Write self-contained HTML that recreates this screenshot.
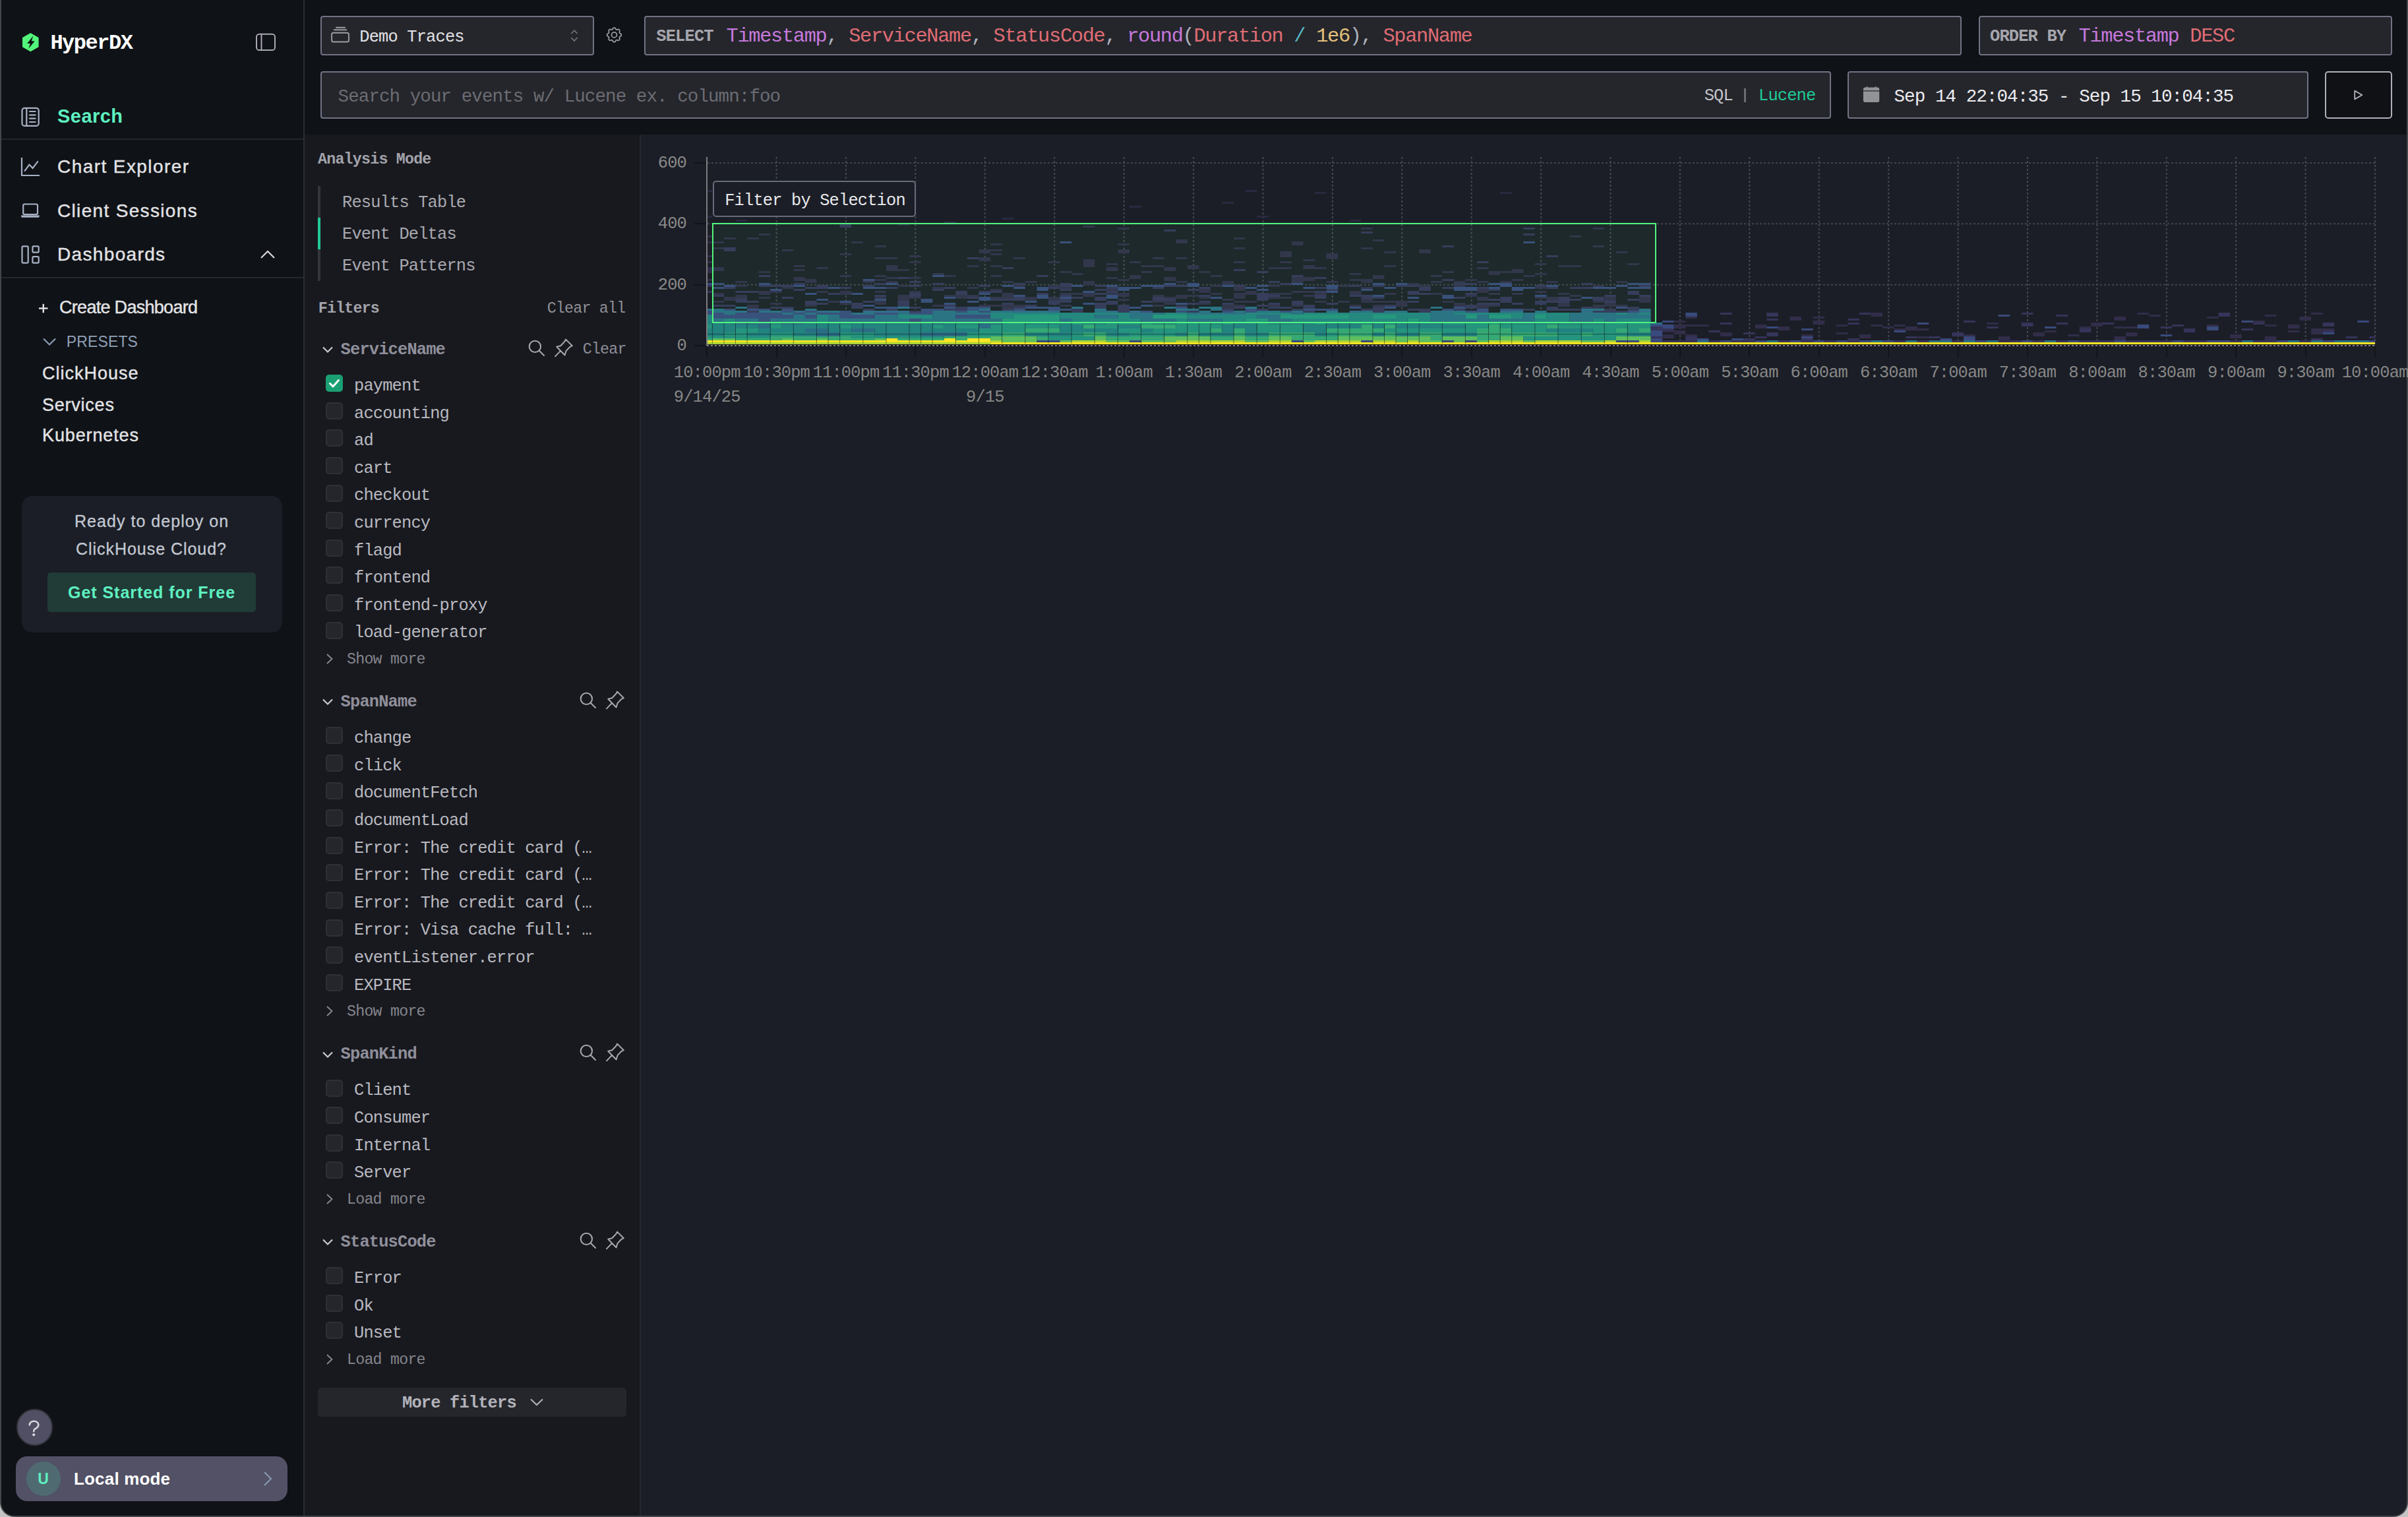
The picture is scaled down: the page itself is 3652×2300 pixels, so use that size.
<!DOCTYPE html>
<html><head><meta charset="utf-8"><title>HyperDX</title>
<style>
html,body{margin:0;padding:0;width:3652px;height:2300px;overflow:hidden;background:#c4c4c4;}
.b,.t,.s{position:absolute;box-sizing:border-box;}
.t{white-space:pre;}
svg.s{overflow:visible;}
</style></head><body>
<div class="b" style="left:0;top:0;width:3652px;height:2300px;background:#c4c4c4;"></div>
<div class="b" style="left:0;top:-4px;width:3652px;height:2304px;background:#43464a;border-radius:0 0 22px 22px;"></div>
<div class="b" style="left:2px;top:-4px;width:3648px;height:2302px;background:#1b1e26;border-radius:0 0 20px 20px;overflow:hidden;"><div class="b" style="left:-2px;top:4px;width:460px;height:2300px;background:#0f1216;"></div><div class="b" style="left:460px;top:4px;width:3652px;height:204px;background:#0f1216;"></div><div class="b" style="left:460px;top:208px;width:510px;height:2300px;background:#18191e;"></div></div>
<div class="b" style="left:460.00px;top:0.00px;width:2.00px;height:2298.00px;background:#2b2d32;"></div>
<div class="b" style="left:970.00px;top:204.00px;width:2.00px;height:2094.00px;background:#25272c;"></div>
<svg class="s" style="left:33.50px;top:49.80px;" width="24.60" height="28.20" viewBox="0 0 24.6 28.2"><path d="M12.3 0 L24.6 7.05 L24.6 21.15 L12.3 28.2 L0 21.15 L0 7.05 Z" fill="#52f57b"/><path d="M16.2 4.6 L7.2 16.1 L11.9 16.1 L9.4 23.8 L18.6 12.3 L13.9 12.3 Z" fill="#0d0f12"/></svg>
<div class="t" style="left:76.40px;top:50.27px;font-size:32.00px;line-height:32.00px;font-family:'Liberation Mono', monospace;color:#ffffff;font-weight:700;letter-spacing:-1.493px;">HyperDX</div>
<svg class="s" style="left:386.00px;top:49.00px;" width="34.00" height="30.00" viewBox="0 0 34 30"><rect x="3" y="2.8" width="28" height="24.3" rx="4.2" fill="none" stroke="#a9a9b4" stroke-width="2"/><line x1="10.5" y1="2.8" x2="10.5" y2="27.1" stroke="#a9a9b4" stroke-width="2"/></svg>
<svg class="s" style="left:30.00px;top:161.00px;" width="32.00" height="32.00" viewBox="0 0 32 32"><rect x="3.5" y="2.9" width="25.2" height="27" rx="3.6" fill="none" stroke="#a7b1c4" stroke-width="2.2"/><line x1="10.3" y1="2.9" x2="10.3" y2="29.9" stroke="#a7b1c4" stroke-width="2.2"/><g stroke="#a7b1c4" stroke-width="2.2" stroke-linecap="round"><line x1="15" y1="8" x2="23.6" y2="8"/><line x1="15" y1="13.3" x2="23.6" y2="13.3"/><line x1="15" y1="18.6" x2="23.6" y2="18.6"/><line x1="15" y1="24" x2="23.6" y2="24"/></g></svg>
<div class="t" style="left:87.00px;top:162.45px;font-size:29.00px;line-height:29.00px;font-family:'Liberation Sans', sans-serif;color:#5ef0c0;font-weight:700;letter-spacing:0.457px;">Search</div>
<div class="b" style="left:2.00px;top:210.00px;width:458.00px;height:2.00px;background:#25272c;"></div>
<svg class="s" style="left:30.00px;top:237.00px;" width="32.00" height="32.00" viewBox="0 0 32 32"><polyline points="3,2 3,29 30,29" fill="none" stroke="#a7b1c4" stroke-width="2.2"/><polyline points="7.1,22.7 14.4,12.6 19.6,18 27.7,7.3" fill="none" stroke="#a7b1c4" stroke-width="2.2" stroke-linejoin="miter"/></svg>
<div class="t" style="left:87.00px;top:239.30px;font-size:28.00px;line-height:28.00px;font-family:'Liberation Sans', sans-serif;color:#e3e3e6;letter-spacing:1.426px;-webkit-text-stroke:0.4px currentColor;">Chart Explorer</div>
<svg class="s" style="left:30.00px;top:305.00px;" width="32.00" height="32.00" viewBox="0 0 32 32"><rect x="5.2" y="4.5" width="21.8" height="15.6" rx="2.2" fill="none" stroke="#a7b1c4" stroke-width="2.2"/><path d="M2 21.6 H29.8 V22.4 Q29.8 24.8 27.2 24.8 H4.6 Q2 24.8 2 22.4 Z" fill="#a7b1c4"/></svg>
<div class="t" style="left:87.00px;top:305.80px;font-size:28.00px;line-height:28.00px;font-family:'Liberation Sans', sans-serif;color:#e3e3e6;letter-spacing:1.334px;-webkit-text-stroke:0.4px currentColor;">Client Sessions</div>
<svg class="s" style="left:30.00px;top:370.00px;" width="32.00" height="32.00" viewBox="0 0 32 32"><rect x="3.5" y="3.4" width="9.2" height="25.2" rx="1.6" fill="none" stroke="#a7b1c4" stroke-width="2.2"/><rect x="19.4" y="3.4" width="9.3" height="9.3" rx="1.6" fill="none" stroke="#a7b1c4" stroke-width="2.2"/><rect x="19.4" y="19.1" width="9.3" height="9.5" rx="1.6" fill="none" stroke="#a7b1c4" stroke-width="2.2"/></svg>
<div class="t" style="left:87.00px;top:372.30px;font-size:28.00px;line-height:28.00px;font-family:'Liberation Sans', sans-serif;color:#e3e3e6;letter-spacing:1.342px;-webkit-text-stroke:0.4px currentColor;">Dashboards</div>
<svg class="s" style="left:394.00px;top:378.00px;" width="24.00" height="16.00" viewBox="0 0 24 16"><polyline points="2,13 12,3 22,13" fill="none" stroke="#d9d9de" stroke-width="2.2"/></svg>
<div class="b" style="left:2.00px;top:420.00px;width:458.00px;height:2.00px;background:#25272c;"></div>
<svg class="s" style="left:58.00px;top:459.00px;" width="16.00" height="18.00" viewBox="0 0 16 18"><line x1="1" y1="8.5" x2="14.5" y2="8.5" stroke="#e3e3e6" stroke-width="2.4"/><line x1="7.75" y1="1.8" x2="7.75" y2="15.2" stroke="#e3e3e6" stroke-width="2.4"/></svg>
<div class="t" style="left:90.00px;top:452.54px;font-size:27.00px;line-height:27.00px;font-family:'Liberation Sans', sans-serif;color:#e3e3e6;letter-spacing:-0.706px;-webkit-text-stroke:0.4px currentColor;">Create Dashboard</div>
<svg class="s" style="left:64.00px;top:511.00px;" width="22.00" height="14.00" viewBox="0 0 22 14"><polyline points="2,2.5 11,11.5 20,2.5" fill="none" stroke="#8a9bb4" stroke-width="2.2"/></svg>
<div class="t" style="left:100.70px;top:506.53px;font-size:23.00px;line-height:23.00px;font-family:'Liberation Sans', sans-serif;color:#8fa0b8;letter-spacing:0.148px;">PRESETS</div>
<div class="t" style="left:64.00px;top:553.14px;font-size:27.00px;line-height:27.00px;font-family:'Liberation Sans', sans-serif;color:#e3e3e6;letter-spacing:1.002px;-webkit-text-stroke:0.4px currentColor;">ClickHouse</div>
<div class="t" style="left:64.00px;top:600.54px;font-size:27.00px;line-height:27.00px;font-family:'Liberation Sans', sans-serif;color:#e3e3e6;letter-spacing:0.765px;-webkit-text-stroke:0.4px currentColor;">Services</div>
<div class="t" style="left:64.00px;top:647.34px;font-size:27.00px;line-height:27.00px;font-family:'Liberation Sans', sans-serif;color:#e3e3e6;letter-spacing:0.877px;-webkit-text-stroke:0.4px currentColor;">Kubernetes</div>
<div class="b" style="left:32.50px;top:752.00px;width:395.50px;height:207.00px;background:#1b1e26;border-radius:16px;"></div>
<div class="t" style="left:113.00px;top:777.84px;font-size:25.00px;line-height:25.00px;font-family:'Liberation Sans', sans-serif;color:#c3c8d2;letter-spacing:1.037px;-webkit-text-stroke:0.3px currentColor;">Ready to deploy on</div>
<div class="t" style="left:115.00px;top:819.84px;font-size:25.00px;line-height:25.00px;font-family:'Liberation Sans', sans-serif;color:#c3c8d2;letter-spacing:0.961px;-webkit-text-stroke:0.3px currentColor;">ClickHouse Cloud?</div>
<div class="b" style="left:72.00px;top:868.00px;width:316.00px;height:60.00px;background:#213b37;border-radius:5px;"></div>
<div class="t" style="left:103.00px;top:886.14px;font-size:25.00px;line-height:25.00px;font-family:'Liberation Sans', sans-serif;color:#5ef0c0;font-weight:700;letter-spacing:0.961px;">Get Started for Free</div>
<div class="b" style="left:24.50px;top:2136.00px;width:55.00px;height:55.50px;background:#504f63;border:2px solid #363640;border-radius:28px;"></div>
<svg class="s" style="left:40.00px;top:2150.00px;" width="24.00" height="30.00" viewBox="0 0 24 30"><path d="M4.8 10.5 C4.8 6.8 7.8 4.8 11.5 4.8 C15.5 4.8 18.3 7.3 18.3 10.6 C18.3 14.5 14.8 15 12.6 16.8 C11.6 17.6 11.2 18.5 11.2 20.3" fill="none" stroke="#d6d6de" stroke-width="2.6" stroke-linecap="round"/><circle cx="11.2" cy="25.3" r="2.1" fill="#d6d6de"/></svg>
<div class="b" style="left:24.00px;top:2208.00px;width:412.00px;height:68.00px;background:#525166;border-radius:17px;"></div>
<div class="b" style="left:40.00px;top:2216.00px;width:52.00px;height:52.00px;background:#4f6b71;border-radius:26px;"></div>
<div class="t" style="left:57.22px;top:2230.53px;font-size:23.00px;line-height:23.00px;font-family:'Liberation Sans', sans-serif;color:#5ef0c0;font-weight:700;">U</div>
<div class="t" style="left:112.00px;top:2229.39px;font-size:26.00px;line-height:26.00px;font-family:'Liberation Sans', sans-serif;color:#ffffff;font-weight:700;letter-spacing:0.174px;">Local mode</div>
<svg class="s" style="left:398.00px;top:2230.00px;" width="16.00" height="24.00" viewBox="0 0 16 24"><polyline points="3,2 13,12 3,22" fill="none" stroke="#8a9bb4" stroke-width="2"/></svg>
<div class="b" style="left:486.00px;top:24.00px;width:415.00px;height:60.00px;background:#25262b;border:2px solid #717284;border-radius:4px;"></div>
<svg class="s" style="left:500.00px;top:38.00px;" width="32.00" height="29.00" viewBox="0 0 32 29"><rect x="3.1" y="11.7" width="25.9" height="13.8" rx="2.6" fill="none" stroke="#9c9ea4" stroke-width="1.9"/><g stroke="#9c9ea4" stroke-width="1.9" stroke-linecap="round"><line x1="6.7" y1="7.2" x2="25.4" y2="7.2"/><line x1="10" y1="3.7" x2="23.1" y2="3.7"/></g></svg>
<div class="t" style="left:545.30px;top:44.00px;font-size:25.44px;line-height:25.44px;font-family:'Liberation Mono', monospace;color:#e2e2e6;letter-spacing:-0.864px;">Demo Traces</div>
<svg class="s" style="left:863.00px;top:44.00px;" width="16.00" height="20.00" viewBox="0 0 16 20"><polyline points="3.2,7 8,2.2 12.6,6.8" fill="none" stroke="#72737b" stroke-width="1.7"/><polyline points="3.2,13.2 8,18 12.6,13" fill="none" stroke="#72737b" stroke-width="1.7"/></svg>
<svg class="s" style="left:917.90px;top:40.10px;" width="28.00" height="28.00" viewBox="0 0 28 28"><g transform="translate(0.4 0.4) scale(0.97)"><path d="M11.3 3.2 C11.8 1.2 15.2 1.2 15.7 3.2 C16 4.6 17.6 5.3 18.8 4.5 C20.6 3.4 23 5.8 21.9 7.6 C21.1 8.8 21.8 10.4 23.2 10.7 C25.2 11.2 25.2 14.6 23.2 15.1 C21.8 15.4 21.1 17 21.9 18.2 C23 20 20.6 22.4 18.8 21.3 C17.6 20.5 16 21.2 15.7 22.6 C15.2 24.6 11.8 24.6 11.3 22.6 C11 21.2 9.4 20.5 8.2 21.3 C6.4 22.4 4 20 5.1 18.2 C5.9 17 5.2 15.4 3.8 15.1 C1.8 14.6 1.8 11.2 3.8 10.7 C5.2 10.4 5.9 8.8 5.1 7.6 C4 5.8 6.4 3.4 8.2 4.5 C9.4 5.3 11 4.6 11.3 3.2 Z" fill="none" stroke="#9c9ea4" stroke-width="1.8"/><circle cx="13.5" cy="12.9" r="4.1" fill="none" stroke="#9c9ea4" stroke-width="1.8"/></g></svg>
<div class="b" style="left:977.40px;top:24.40px;width:1997.90px;height:59.20px;background:#25262b;border:2px solid #717284;border-radius:4px;"></div>
<div class="t" style="left:995.30px;top:42.80px;font-size:25.44px;line-height:25.44px;font-family:'Liberation Mono', monospace;color:#a6a6ae;font-weight:700;letter-spacing:-0.864px;">SELECT</div>
<div class="t" style="left:1101.50px;top:39.92px;font-size:30.38px;line-height:30.38px;font-family:'Liberation Mono', monospace;letter-spacing:-1.350px;"><span style="color:#c678dd;">Timestamp</span><span style="color:#abb2bf;">,&nbsp;</span><span style="color:#e06c75;">ServiceName</span><span style="color:#abb2bf;">,&nbsp;</span><span style="color:#e06c75;">StatusCode</span><span style="color:#abb2bf;">,&nbsp;</span><span style="color:#c678dd;">round</span><span style="color:#abb2bf;">(</span><span style="color:#e06c75;">Duration</span><span style="color:#abb2bf;">&nbsp;</span><span style="color:#56b6c2;">/</span><span style="color:#abb2bf;">&nbsp;</span><span style="color:#e5c07b;">1e6</span><span style="color:#abb2bf;">)</span><span style="color:#abb2bf;">,&nbsp;</span><span style="color:#e06c75;">SpanName</span></div>
<div class="b" style="left:3000.60px;top:24.40px;width:627.10px;height:59.20px;background:#25262b;border:2px solid #717284;border-radius:4px;"></div>
<div class="t" style="left:3018.00px;top:43.00px;font-size:25.44px;line-height:25.44px;font-family:'Liberation Mono', monospace;color:#a6a6ae;font-weight:700;letter-spacing:-0.864px;">ORDER BY</div>
<div class="t" style="left:3152.50px;top:39.92px;font-size:30.38px;line-height:30.38px;font-family:'Liberation Mono', monospace;letter-spacing:-1.350px;"><span style="color:#c678dd;">Timestamp</span><span style="color:#abb2bf;">&nbsp;</span><span style="color:#e06c75;">DESC</span></div>
<div class="b" style="left:486.00px;top:108.00px;width:2291.40px;height:72.00px;background:#25262b;border:2px solid #717284;border-radius:4px;"></div>
<div class="t" style="left:512.60px;top:132.58px;font-size:27.56px;line-height:27.56px;font-family:'Liberation Mono', monospace;color:#6b6c73;letter-spacing:-0.936px;">Search your events w/ Lucene ex. column:foo</div>
<div class="t" style="left:2584.70px;top:132.80px;font-size:25.44px;line-height:25.44px;font-family:'Liberation Mono', monospace;color:#c4c4ca;letter-spacing:-0.864px;">SQL</div>
<div class="b" style="left:2644.50px;top:133.60px;width:3.00px;height:21.70px;background:#6c6d73;"></div>
<div class="t" style="left:2667.00px;top:132.80px;font-size:25.44px;line-height:25.44px;font-family:'Liberation Mono', monospace;color:#20c997;letter-spacing:-0.864px;">Lucene</div>
<div class="b" style="left:2802.30px;top:108.00px;width:698.70px;height:72.00px;background:#25262b;border:2px solid #717284;border-radius:4px;"></div>
<svg class="s" style="left:2825.00px;top:130.00px;" width="26.00" height="26.00" viewBox="0 0 26 26"><path d="M0.9 7.2 V5.4 Q0.9 2.6 3.7 2.6 H22.4 Q25.2 2.6 25.2 5.4 V7.2 Z" fill="#929397"/><path d="M0.9 8.4 H25.2 V22.2 Q25.2 25 22.4 25 H3.7 Q0.9 25 0.9 22.2 Z" fill="#929397"/><rect x="5.7" y="1" width="1.6" height="3" rx="0.6" fill="#929397"/><rect x="18.8" y="1" width="1.6" height="3" rx="0.6" fill="#929397"/></svg>
<div class="t" style="left:2872.50px;top:133.28px;font-size:27.56px;line-height:27.56px;font-family:'Liberation Mono', monospace;color:#ececf0;letter-spacing:-0.936px;">Sep 14 22:04:35 - Sep 15 10:04:35</div>
<div class="b" style="left:3526.00px;top:108.00px;width:101.70px;height:72.00px;background:#0f1115;border:2px solid #b0b0bb;border-radius:5px;"></div>
<svg class="s" style="left:3567.00px;top:135.00px;" width="20.00" height="18.00" viewBox="0 0 20 18"><path d="M4.2 2.6 L15.4 9 L4.2 15.4 Z" fill="none" stroke="#b2b2bc" stroke-width="1.8" stroke-linejoin="round"/></svg>
<div class="t" style="left:482.00px;top:231.13px;font-size:23.32px;line-height:23.32px;font-family:'Liberation Mono', monospace;color:#a3a3ab;font-weight:700;letter-spacing:-0.792px;">Analysis Mode</div>
<div class="b" style="left:481.60px;top:282.00px;width:4.00px;height:143.60px;background:#35363c;"></div>
<div class="b" style="left:481.60px;top:330.00px;width:4.00px;height:48.00px;background:#20c997;"></div>
<div class="t" style="left:519.00px;top:294.50px;font-size:25.44px;line-height:25.44px;font-family:'Liberation Mono', monospace;color:#a9a9b1;letter-spacing:-0.864px;">Results Table</div>
<div class="t" style="left:519.00px;top:342.90px;font-size:25.44px;line-height:25.44px;font-family:'Liberation Mono', monospace;color:#a9a9b1;letter-spacing:-0.864px;">Event Deltas</div>
<div class="t" style="left:519.00px;top:391.00px;font-size:25.44px;line-height:25.44px;font-family:'Liberation Mono', monospace;color:#a9a9b1;letter-spacing:-0.864px;">Event Patterns</div>
<div class="t" style="left:482.70px;top:457.13px;font-size:23.32px;line-height:23.32px;font-family:'Liberation Mono', monospace;color:#a3a3ab;font-weight:700;letter-spacing:-0.792px;">Filters</div>
<div class="t" style="left:829.70px;top:457.13px;font-size:23.32px;line-height:23.32px;font-family:'Liberation Mono', monospace;color:#909098;letter-spacing:-0.792px;">Clear all</div>
<svg class="s" style="left:487.50px;top:524.20px;" width="19.00" height="13.00" viewBox="0 0 19 13"><polyline points="2,2.5 9,9.5 16,2.5" fill="none" stroke="#c9c9cf" stroke-width="2.2"/></svg>
<div class="t" style="left:516.60px;top:517.70px;font-size:25.44px;line-height:25.44px;font-family:'Liberation Mono', monospace;color:#8f8f9b;font-weight:700;letter-spacing:-0.864px;">ServiceName</div>
<svg class="s" style="left:799.00px;top:513.00px;" width="29.76" height="29.76" viewBox="0 0 24 24"><circle cx="10" cy="10" r="7" fill="none" stroke="#a6a6ae" stroke-width="1.65"/><path d="M21 21l-6 -6" fill="none" stroke="#a6a6ae" stroke-width="1.65" stroke-linecap="round"/></svg>
<svg class="s" style="left:840.00px;top:512.00px;" width="30.00" height="30.00" viewBox="0 0 30 30"><path d="M18.1 2.6 L27.8 12.3 L24.5 13.8 L18.5 20.1 L16.6 26.5 L4.3 13.8 L10.3 12.3 L16.2 6.0 Z M9.9 20.1 L2.0 28.4" fill="none" stroke="#a6a6ae" stroke-width="2" stroke-linejoin="round" stroke-linecap="round"/></svg>
<div class="t" style="left:883.70px;top:518.73px;font-size:23.32px;line-height:23.32px;font-family:'Liberation Mono', monospace;color:#8e8e9a;letter-spacing:-0.792px;">Clear</div>
<div class="b" style="left:494.00px;top:568.20px;width:26.00px;height:26.00px;background:#1a9f72;border-radius:5px;"></div>
<svg class="s" style="left:494.00px;top:568.20px;" width="26.00" height="26.00" viewBox="0 0 26 26"><polyline points="6.5,13.5 11,18 19.5,8.5" fill="none" stroke="#ffffff" stroke-width="3" stroke-linecap="round" stroke-linejoin="round"/></svg>
<div class="t" style="left:537.00px;top:573.00px;font-size:25.44px;line-height:25.44px;font-family:'Liberation Mono', monospace;color:#b9b9c1;letter-spacing:-0.864px;">payment</div>
<div class="b" style="left:494.00px;top:609.80px;width:26.00px;height:26.00px;background:#25262b;border:2px solid #2f3035;border-radius:5px;"></div>
<div class="t" style="left:537.00px;top:614.60px;font-size:25.44px;line-height:25.44px;font-family:'Liberation Mono', monospace;color:#b9b9c1;letter-spacing:-0.864px;">accounting</div>
<div class="b" style="left:494.00px;top:651.40px;width:26.00px;height:26.00px;background:#25262b;border:2px solid #2f3035;border-radius:5px;"></div>
<div class="t" style="left:537.00px;top:656.20px;font-size:25.44px;line-height:25.44px;font-family:'Liberation Mono', monospace;color:#b9b9c1;letter-spacing:-0.864px;">ad</div>
<div class="b" style="left:494.00px;top:693.00px;width:26.00px;height:26.00px;background:#25262b;border:2px solid #2f3035;border-radius:5px;"></div>
<div class="t" style="left:537.00px;top:697.80px;font-size:25.44px;line-height:25.44px;font-family:'Liberation Mono', monospace;color:#b9b9c1;letter-spacing:-0.864px;">cart</div>
<div class="b" style="left:494.00px;top:734.60px;width:26.00px;height:26.00px;background:#25262b;border:2px solid #2f3035;border-radius:5px;"></div>
<div class="t" style="left:537.00px;top:739.40px;font-size:25.44px;line-height:25.44px;font-family:'Liberation Mono', monospace;color:#b9b9c1;letter-spacing:-0.864px;">checkout</div>
<div class="b" style="left:494.00px;top:776.20px;width:26.00px;height:26.00px;background:#25262b;border:2px solid #2f3035;border-radius:5px;"></div>
<div class="t" style="left:537.00px;top:781.00px;font-size:25.44px;line-height:25.44px;font-family:'Liberation Mono', monospace;color:#b9b9c1;letter-spacing:-0.864px;">currency</div>
<div class="b" style="left:494.00px;top:817.80px;width:26.00px;height:26.00px;background:#25262b;border:2px solid #2f3035;border-radius:5px;"></div>
<div class="t" style="left:537.00px;top:822.60px;font-size:25.44px;line-height:25.44px;font-family:'Liberation Mono', monospace;color:#b9b9c1;letter-spacing:-0.864px;">flagd</div>
<div class="b" style="left:494.00px;top:859.40px;width:26.00px;height:26.00px;background:#25262b;border:2px solid #2f3035;border-radius:5px;"></div>
<div class="t" style="left:537.00px;top:864.20px;font-size:25.44px;line-height:25.44px;font-family:'Liberation Mono', monospace;color:#b9b9c1;letter-spacing:-0.864px;">frontend</div>
<div class="b" style="left:494.00px;top:901.00px;width:26.00px;height:26.00px;background:#25262b;border:2px solid #2f3035;border-radius:5px;"></div>
<div class="t" style="left:537.00px;top:905.80px;font-size:25.44px;line-height:25.44px;font-family:'Liberation Mono', monospace;color:#b9b9c1;letter-spacing:-0.864px;">frontend-proxy</div>
<div class="b" style="left:494.00px;top:942.60px;width:26.00px;height:26.00px;background:#25262b;border:2px solid #2f3035;border-radius:5px;"></div>
<div class="t" style="left:537.00px;top:947.40px;font-size:25.44px;line-height:25.44px;font-family:'Liberation Mono', monospace;color:#b9b9c1;letter-spacing:-0.864px;">load-generator</div>
<svg class="s" style="left:494.00px;top:990.10px;" width="14.00" height="20.00" viewBox="0 0 14 20"><polyline points="2,2 9.5,9 2,16" fill="none" stroke="#8a8a92" stroke-width="1.8"/></svg>
<div class="t" style="left:526.00px;top:989.23px;font-size:23.32px;line-height:23.32px;font-family:'Liberation Mono', monospace;color:#85858d;letter-spacing:-0.792px;">Show more</div>
<svg class="s" style="left:487.50px;top:1058.40px;" width="19.00" height="13.00" viewBox="0 0 19 13"><polyline points="2,2.5 9,9.5 16,2.5" fill="none" stroke="#c9c9cf" stroke-width="2.2"/></svg>
<div class="t" style="left:516.60px;top:1051.90px;font-size:25.44px;line-height:25.44px;font-family:'Liberation Mono', monospace;color:#8f8f9b;font-weight:700;letter-spacing:-0.864px;">SpanName</div>
<svg class="s" style="left:877.00px;top:1047.20px;" width="29.76" height="29.76" viewBox="0 0 24 24"><circle cx="10" cy="10" r="7" fill="none" stroke="#a6a6ae" stroke-width="1.65"/><path d="M21 21l-6 -6" fill="none" stroke="#a6a6ae" stroke-width="1.65" stroke-linecap="round"/></svg>
<svg class="s" style="left:918.00px;top:1046.20px;" width="30.00" height="30.00" viewBox="0 0 30 30"><path d="M18.1 2.6 L27.8 12.3 L24.5 13.8 L18.5 20.1 L16.6 26.5 L4.3 13.8 L10.3 12.3 L16.2 6.0 Z M9.9 20.1 L2.0 28.4" fill="none" stroke="#a6a6ae" stroke-width="2" stroke-linejoin="round" stroke-linecap="round"/></svg>
<div class="b" style="left:494.00px;top:1102.40px;width:26.00px;height:26.00px;background:#25262b;border:2px solid #2f3035;border-radius:5px;"></div>
<div class="t" style="left:537.00px;top:1107.20px;font-size:25.44px;line-height:25.44px;font-family:'Liberation Mono', monospace;color:#b9b9c1;letter-spacing:-0.864px;">change</div>
<div class="b" style="left:494.00px;top:1144.00px;width:26.00px;height:26.00px;background:#25262b;border:2px solid #2f3035;border-radius:5px;"></div>
<div class="t" style="left:537.00px;top:1148.80px;font-size:25.44px;line-height:25.44px;font-family:'Liberation Mono', monospace;color:#b9b9c1;letter-spacing:-0.864px;">click</div>
<div class="b" style="left:494.00px;top:1185.60px;width:26.00px;height:26.00px;background:#25262b;border:2px solid #2f3035;border-radius:5px;"></div>
<div class="t" style="left:537.00px;top:1190.40px;font-size:25.44px;line-height:25.44px;font-family:'Liberation Mono', monospace;color:#b9b9c1;letter-spacing:-0.864px;">documentFetch</div>
<div class="b" style="left:494.00px;top:1227.20px;width:26.00px;height:26.00px;background:#25262b;border:2px solid #2f3035;border-radius:5px;"></div>
<div class="t" style="left:537.00px;top:1232.00px;font-size:25.44px;line-height:25.44px;font-family:'Liberation Mono', monospace;color:#b9b9c1;letter-spacing:-0.864px;">documentLoad</div>
<div class="b" style="left:494.00px;top:1268.80px;width:26.00px;height:26.00px;background:#25262b;border:2px solid #2f3035;border-radius:5px;"></div>
<div class="t" style="left:537.00px;top:1273.60px;font-size:25.44px;line-height:25.44px;font-family:'Liberation Mono', monospace;color:#b9b9c1;letter-spacing:-0.864px;">Error: The credit card (…</div>
<div class="b" style="left:494.00px;top:1310.40px;width:26.00px;height:26.00px;background:#25262b;border:2px solid #2f3035;border-radius:5px;"></div>
<div class="t" style="left:537.00px;top:1315.20px;font-size:25.44px;line-height:25.44px;font-family:'Liberation Mono', monospace;color:#b9b9c1;letter-spacing:-0.864px;">Error: The credit card (…</div>
<div class="b" style="left:494.00px;top:1352.00px;width:26.00px;height:26.00px;background:#25262b;border:2px solid #2f3035;border-radius:5px;"></div>
<div class="t" style="left:537.00px;top:1356.80px;font-size:25.44px;line-height:25.44px;font-family:'Liberation Mono', monospace;color:#b9b9c1;letter-spacing:-0.864px;">Error: The credit card (…</div>
<div class="b" style="left:494.00px;top:1393.60px;width:26.00px;height:26.00px;background:#25262b;border:2px solid #2f3035;border-radius:5px;"></div>
<div class="t" style="left:537.00px;top:1398.40px;font-size:25.44px;line-height:25.44px;font-family:'Liberation Mono', monospace;color:#b9b9c1;letter-spacing:-0.864px;">Error: Visa cache full: …</div>
<div class="b" style="left:494.00px;top:1435.20px;width:26.00px;height:26.00px;background:#25262b;border:2px solid #2f3035;border-radius:5px;"></div>
<div class="t" style="left:537.00px;top:1440.00px;font-size:25.44px;line-height:25.44px;font-family:'Liberation Mono', monospace;color:#b9b9c1;letter-spacing:-0.864px;">eventListener.error</div>
<div class="b" style="left:494.00px;top:1476.80px;width:26.00px;height:26.00px;background:#25262b;border:2px solid #2f3035;border-radius:5px;"></div>
<div class="t" style="left:537.00px;top:1481.60px;font-size:25.44px;line-height:25.44px;font-family:'Liberation Mono', monospace;color:#b9b9c1;letter-spacing:-0.864px;">EXPIRE</div>
<svg class="s" style="left:494.00px;top:1524.30px;" width="14.00" height="20.00" viewBox="0 0 14 20"><polyline points="2,2 9.5,9 2,16" fill="none" stroke="#8a8a92" stroke-width="1.8"/></svg>
<div class="t" style="left:526.00px;top:1523.43px;font-size:23.32px;line-height:23.32px;font-family:'Liberation Mono', monospace;color:#85858d;letter-spacing:-0.792px;">Show more</div>
<svg class="s" style="left:487.50px;top:1592.60px;" width="19.00" height="13.00" viewBox="0 0 19 13"><polyline points="2,2.5 9,9.5 16,2.5" fill="none" stroke="#c9c9cf" stroke-width="2.2"/></svg>
<div class="t" style="left:516.60px;top:1586.10px;font-size:25.44px;line-height:25.44px;font-family:'Liberation Mono', monospace;color:#8f8f9b;font-weight:700;letter-spacing:-0.864px;">SpanKind</div>
<svg class="s" style="left:877.00px;top:1581.40px;" width="29.76" height="29.76" viewBox="0 0 24 24"><circle cx="10" cy="10" r="7" fill="none" stroke="#a6a6ae" stroke-width="1.65"/><path d="M21 21l-6 -6" fill="none" stroke="#a6a6ae" stroke-width="1.65" stroke-linecap="round"/></svg>
<svg class="s" style="left:918.00px;top:1580.40px;" width="30.00" height="30.00" viewBox="0 0 30 30"><path d="M18.1 2.6 L27.8 12.3 L24.5 13.8 L18.5 20.1 L16.6 26.5 L4.3 13.8 L10.3 12.3 L16.2 6.0 Z M9.9 20.1 L2.0 28.4" fill="none" stroke="#a6a6ae" stroke-width="2" stroke-linejoin="round" stroke-linecap="round"/></svg>
<div class="b" style="left:494.00px;top:1636.60px;width:26.00px;height:26.00px;background:#25262b;border:2px solid #2f3035;border-radius:5px;"></div>
<div class="t" style="left:537.00px;top:1641.40px;font-size:25.44px;line-height:25.44px;font-family:'Liberation Mono', monospace;color:#b9b9c1;letter-spacing:-0.864px;">Client</div>
<div class="b" style="left:494.00px;top:1678.20px;width:26.00px;height:26.00px;background:#25262b;border:2px solid #2f3035;border-radius:5px;"></div>
<div class="t" style="left:537.00px;top:1683.00px;font-size:25.44px;line-height:25.44px;font-family:'Liberation Mono', monospace;color:#b9b9c1;letter-spacing:-0.864px;">Consumer</div>
<div class="b" style="left:494.00px;top:1719.80px;width:26.00px;height:26.00px;background:#25262b;border:2px solid #2f3035;border-radius:5px;"></div>
<div class="t" style="left:537.00px;top:1724.60px;font-size:25.44px;line-height:25.44px;font-family:'Liberation Mono', monospace;color:#b9b9c1;letter-spacing:-0.864px;">Internal</div>
<div class="b" style="left:494.00px;top:1761.40px;width:26.00px;height:26.00px;background:#25262b;border:2px solid #2f3035;border-radius:5px;"></div>
<div class="t" style="left:537.00px;top:1766.20px;font-size:25.44px;line-height:25.44px;font-family:'Liberation Mono', monospace;color:#b9b9c1;letter-spacing:-0.864px;">Server</div>
<svg class="s" style="left:494.00px;top:1808.90px;" width="14.00" height="20.00" viewBox="0 0 14 20"><polyline points="2,2 9.5,9 2,16" fill="none" stroke="#8a8a92" stroke-width="1.8"/></svg>
<div class="t" style="left:526.00px;top:1808.03px;font-size:23.32px;line-height:23.32px;font-family:'Liberation Mono', monospace;color:#85858d;letter-spacing:-0.792px;">Load more</div>
<svg class="s" style="left:487.50px;top:1877.20px;" width="19.00" height="13.00" viewBox="0 0 19 13"><polyline points="2,2.5 9,9.5 16,2.5" fill="none" stroke="#c9c9cf" stroke-width="2.2"/></svg>
<div class="t" style="left:516.60px;top:1870.70px;font-size:25.44px;line-height:25.44px;font-family:'Liberation Mono', monospace;color:#8f8f9b;font-weight:700;letter-spacing:-0.864px;">StatusCode</div>
<svg class="s" style="left:877.00px;top:1866.00px;" width="29.76" height="29.76" viewBox="0 0 24 24"><circle cx="10" cy="10" r="7" fill="none" stroke="#a6a6ae" stroke-width="1.65"/><path d="M21 21l-6 -6" fill="none" stroke="#a6a6ae" stroke-width="1.65" stroke-linecap="round"/></svg>
<svg class="s" style="left:918.00px;top:1865.00px;" width="30.00" height="30.00" viewBox="0 0 30 30"><path d="M18.1 2.6 L27.8 12.3 L24.5 13.8 L18.5 20.1 L16.6 26.5 L4.3 13.8 L10.3 12.3 L16.2 6.0 Z M9.9 20.1 L2.0 28.4" fill="none" stroke="#a6a6ae" stroke-width="2" stroke-linejoin="round" stroke-linecap="round"/></svg>
<div class="b" style="left:494.00px;top:1921.20px;width:26.00px;height:26.00px;background:#25262b;border:2px solid #2f3035;border-radius:5px;"></div>
<div class="t" style="left:537.00px;top:1926.00px;font-size:25.44px;line-height:25.44px;font-family:'Liberation Mono', monospace;color:#b9b9c1;letter-spacing:-0.864px;">Error</div>
<div class="b" style="left:494.00px;top:1962.80px;width:26.00px;height:26.00px;background:#25262b;border:2px solid #2f3035;border-radius:5px;"></div>
<div class="t" style="left:537.00px;top:1967.60px;font-size:25.44px;line-height:25.44px;font-family:'Liberation Mono', monospace;color:#b9b9c1;letter-spacing:-0.864px;">Ok</div>
<div class="b" style="left:494.00px;top:2004.40px;width:26.00px;height:26.00px;background:#25262b;border:2px solid #2f3035;border-radius:5px;"></div>
<div class="t" style="left:537.00px;top:2009.20px;font-size:25.44px;line-height:25.44px;font-family:'Liberation Mono', monospace;color:#b9b9c1;letter-spacing:-0.864px;">Unset</div>
<svg class="s" style="left:494.00px;top:2051.90px;" width="14.00" height="20.00" viewBox="0 0 14 20"><polyline points="2,2 9.5,9 2,16" fill="none" stroke="#8a8a92" stroke-width="1.8"/></svg>
<div class="t" style="left:526.00px;top:2051.03px;font-size:23.32px;line-height:23.32px;font-family:'Liberation Mono', monospace;color:#85858d;letter-spacing:-0.792px;">Load more</div>
<div class="b" style="left:482.40px;top:2103.90px;width:467.30px;height:43.70px;background:#25262b;border-radius:5px;"></div>
<div class="t" style="left:610.00px;top:2115.40px;font-size:25.44px;line-height:25.44px;font-family:'Liberation Mono', monospace;color:#b3b3bb;font-weight:700;letter-spacing:-0.864px;">More filters</div>
<svg class="s" style="left:803.00px;top:2119.40px;" width="24.00" height="14.00" viewBox="0 0 24 14"><polyline points="2,2.5 11,11 20,2.5" fill="none" stroke="#b3b3bb" stroke-width="2"/></svg>
<div class="t" style="left:997.80px;top:234.80px;font-size:25.44px;line-height:25.44px;font-family:'Liberation Mono', monospace;color:#8a8a8a;letter-spacing:-0.864px;">600</div>
<div class="b" style="left:1052.60px;top:246.00px;width:17.40px;height:2.00px;background:#121419;"></div>
<div class="t" style="left:997.80px;top:327.10px;font-size:25.44px;line-height:25.44px;font-family:'Liberation Mono', monospace;color:#8a8a8a;letter-spacing:-0.864px;">400</div>
<div class="b" style="left:1052.60px;top:338.30px;width:17.40px;height:2.00px;background:#121419;"></div>
<div class="t" style="left:997.80px;top:419.50px;font-size:25.44px;line-height:25.44px;font-family:'Liberation Mono', monospace;color:#8a8a8a;letter-spacing:-0.864px;">200</div>
<div class="b" style="left:1052.60px;top:430.70px;width:17.40px;height:2.00px;background:#121419;"></div>
<div class="t" style="left:1026.60px;top:511.80px;font-size:25.44px;line-height:25.44px;font-family:'Liberation Mono', monospace;color:#8a8a8a;letter-spacing:-0.864px;">0</div>
<div class="b" style="left:1052.60px;top:523.00px;width:17.40px;height:2.00px;background:#121419;"></div>
<svg class="s" style="left:1072.00px;top:237.00px;" width="2540.00" height="300.00" viewBox="0 0 2540 300"><line x1="1" y1="10.0" x2="2530" y2="10.0" stroke="#41444c" stroke-width="2" stroke-dasharray="3 3"/><line x1="1" y1="102.30000000000001" x2="2530" y2="102.30000000000001" stroke="#41444c" stroke-width="2" stroke-dasharray="3 3"/><line x1="1" y1="194.7" x2="2530" y2="194.7" stroke="#41444c" stroke-width="2" stroke-dasharray="3 3"/><line x1="0.2" y1="1" x2="0.2" y2="284" stroke="#454851" stroke-width="2" stroke-dasharray="3 3"/><line x1="105.6" y1="1" x2="105.6" y2="284" stroke="#454851" stroke-width="2" stroke-dasharray="3 3"/><line x1="211.0" y1="1" x2="211.0" y2="284" stroke="#454851" stroke-width="2" stroke-dasharray="3 3"/><line x1="316.4" y1="1" x2="316.4" y2="284" stroke="#454851" stroke-width="2" stroke-dasharray="3 3"/><line x1="421.8" y1="1" x2="421.8" y2="284" stroke="#454851" stroke-width="2" stroke-dasharray="3 3"/><line x1="527.2" y1="1" x2="527.2" y2="284" stroke="#454851" stroke-width="2" stroke-dasharray="3 3"/><line x1="632.7" y1="1" x2="632.7" y2="284" stroke="#454851" stroke-width="2" stroke-dasharray="3 3"/><line x1="738.1" y1="1" x2="738.1" y2="284" stroke="#454851" stroke-width="2" stroke-dasharray="3 3"/><line x1="843.5" y1="1" x2="843.5" y2="284" stroke="#454851" stroke-width="2" stroke-dasharray="3 3"/><line x1="948.9" y1="1" x2="948.9" y2="284" stroke="#454851" stroke-width="2" stroke-dasharray="3 3"/><line x1="1054.3" y1="1" x2="1054.3" y2="284" stroke="#454851" stroke-width="2" stroke-dasharray="3 3"/><line x1="1159.7" y1="1" x2="1159.7" y2="284" stroke="#454851" stroke-width="2" stroke-dasharray="3 3"/><line x1="1265.1" y1="1" x2="1265.1" y2="284" stroke="#454851" stroke-width="2" stroke-dasharray="3 3"/><line x1="1370.5" y1="1" x2="1370.5" y2="284" stroke="#454851" stroke-width="2" stroke-dasharray="3 3"/><line x1="1475.9" y1="1" x2="1475.9" y2="284" stroke="#454851" stroke-width="2" stroke-dasharray="3 3"/><line x1="1581.3" y1="1" x2="1581.3" y2="284" stroke="#454851" stroke-width="2" stroke-dasharray="3 3"/><line x1="1686.8" y1="1" x2="1686.8" y2="284" stroke="#454851" stroke-width="2" stroke-dasharray="3 3"/><line x1="1792.2" y1="1" x2="1792.2" y2="284" stroke="#454851" stroke-width="2" stroke-dasharray="3 3"/><line x1="1897.6" y1="1" x2="1897.6" y2="284" stroke="#454851" stroke-width="2" stroke-dasharray="3 3"/><line x1="2003.0" y1="1" x2="2003.0" y2="284" stroke="#454851" stroke-width="2" stroke-dasharray="3 3"/><line x1="2108.4" y1="1" x2="2108.4" y2="284" stroke="#454851" stroke-width="2" stroke-dasharray="3 3"/><line x1="2213.8" y1="1" x2="2213.8" y2="284" stroke="#454851" stroke-width="2" stroke-dasharray="3 3"/><line x1="2319.2" y1="1" x2="2319.2" y2="284" stroke="#454851" stroke-width="2" stroke-dasharray="3 3"/><line x1="2424.6" y1="1" x2="2424.6" y2="284" stroke="#454851" stroke-width="2" stroke-dasharray="3 3"/><line x1="2530.0" y1="1" x2="2530.0" y2="284" stroke="#454851" stroke-width="2" stroke-dasharray="3 3"/><path fill="#aad537" d="M1.0 282.0h7.4v3.0h-7.4zM8.4 282.0h17.6v3.0h-17.6zM26.0 282.0h17.6v3.0h-17.6zM43.5 282.0h17.6v3.0h-17.6zM61.1 282.0h17.6v3.0h-17.6zM78.7 282.0h17.6v3.0h-17.6zM96.2 282.0h17.6v3.0h-17.6zM113.8 282.0h17.6v3.0h-17.6zM131.4 282.0h17.6v3.0h-17.6zM149.0 282.0h17.6v3.0h-17.6zM166.5 282.0h17.6v3.0h-17.6zM184.1 282.0h17.6v3.0h-17.6zM201.7 282.0h17.6v3.0h-17.6zM219.2 282.0h17.6v3.0h-17.6zM236.8 282.0h17.6v3.0h-17.6zM254.4 282.0h17.6v3.0h-17.6zM272.0 282.0h17.6v3.0h-17.6zM289.5 282.0h17.6v3.0h-17.6zM307.1 282.0h17.6v3.0h-17.6zM324.7 282.0h17.6v3.0h-17.6zM342.2 282.0h17.6v3.0h-17.6zM359.8 282.0h17.6v3.0h-17.6zM377.4 282.0h17.6v3.0h-17.6zM394.9 282.0h17.6v3.0h-17.6zM412.5 282.0h17.6v3.0h-17.6zM430.1 279.0h17.6v3.0h-17.6zM553.1 279.0h17.6v3.0h-17.6zM570.6 279.0h17.6v3.0h-17.6zM588.2 279.0h17.6v3.0h-17.6zM711.2 279.0h17.6v3.0h-17.6zM728.8 279.0h17.6v3.0h-17.6zM746.3 279.0h17.6v3.0h-17.6zM763.9 279.0h17.6v3.0h-17.6zM781.5 279.0h17.6v3.0h-17.6zM799.1 279.0h17.6v3.0h-17.6zM851.8 279.0h17.6v3.0h-17.6zM869.3 279.0h17.6v3.0h-17.6zM922.0 279.0h17.6v3.0h-17.6zM939.6 279.0h17.6v3.0h-17.6zM957.2 279.0h17.6v3.0h-17.6zM974.8 279.0h17.6v3.0h-17.6zM1009.9 279.0h17.6v3.0h-17.6zM1027.5 279.0h17.6v3.0h-17.6zM1062.6 279.0h17.6v3.0h-17.6zM1185.6 279.0h17.6v3.0h-17.6zM1203.2 279.0h17.6v3.0h-17.6zM1220.7 279.0h17.6v3.0h-17.6zM1255.9 279.0h17.6v3.0h-17.6zM1273.4 279.0h17.6v3.0h-17.6zM1291.0 279.0h17.6v3.0h-17.6zM1308.6 279.0h17.6v3.0h-17.6zM1361.3 279.0h17.6v3.0h-17.6zM1414.0 279.0h17.6v3.0h-17.6zM1449.1 283.5h17.6v1.5h-17.6zM1466.7 283.5h17.6v1.5h-17.6zM1484.3 283.5h17.6v1.5h-17.6zM1554.6 283.5h17.6v1.5h-17.6zM1572.1 283.5h17.6v1.5h-17.6zM1589.7 283.5h17.6v1.5h-17.6zM1607.3 283.5h17.6v1.5h-17.6zM1642.4 283.5h17.6v1.5h-17.6zM1677.6 283.5h17.6v1.5h-17.6zM1712.7 283.5h17.6v1.5h-17.6zM1747.8 283.5h17.6v1.5h-17.6zM1783.0 283.5h17.6v1.5h-17.6zM1818.1 283.5h17.6v1.5h-17.6zM1835.7 283.5h17.6v1.5h-17.6zM1853.2 283.5h17.6v1.5h-17.6zM1888.4 283.5h17.6v1.5h-17.6zM1906.0 283.5h17.6v1.5h-17.6zM1923.5 283.5h17.6v1.5h-17.6zM1941.1 283.5h17.6v1.5h-17.6zM1958.7 283.5h17.6v1.5h-17.6zM1993.8 283.5h17.6v1.5h-17.6zM2011.4 283.5h17.6v1.5h-17.6zM2046.5 283.5h17.6v1.5h-17.6zM2064.1 283.5h17.6v1.5h-17.6zM2081.7 283.5h17.6v1.5h-17.6zM2099.2 283.5h17.6v1.5h-17.6zM2134.4 283.5h17.6v1.5h-17.6zM2169.5 283.5h17.6v1.5h-17.6zM2204.7 283.5h17.6v1.5h-17.6zM2239.8 283.5h17.6v1.5h-17.6zM2274.9 283.5h17.6v1.5h-17.6zM2327.6 283.5h17.6v1.5h-17.6zM2380.3 283.5h17.6v1.5h-17.6zM2397.9 283.5h17.6v1.5h-17.6zM2433.1 283.5h17.6v1.5h-17.6zM2450.6 283.5h17.6v1.5h-17.6zM2485.8 283.5h17.6v1.5h-17.6zM2503.3 283.5h17.6v1.5h-17.6zM2520.9 283.5h9.1v1.5h-9.1z"/><path fill="#fbe424" d="M1.0 279.0h7.4v3.0h-7.4zM8.4 279.0h17.6v3.0h-17.6zM26.0 279.0h17.6v3.0h-17.6zM43.5 279.0h17.6v3.0h-17.6zM61.1 279.0h17.6v3.0h-17.6zM78.7 279.0h17.6v3.0h-17.6zM96.2 279.0h17.6v3.0h-17.6zM113.8 279.0h17.6v3.0h-17.6zM131.4 279.0h17.6v3.0h-17.6zM149.0 279.0h17.6v3.0h-17.6zM166.5 279.0h17.6v3.0h-17.6zM184.1 279.0h17.6v3.0h-17.6zM201.7 279.0h17.6v3.0h-17.6zM219.2 279.0h17.6v3.0h-17.6zM236.8 279.0h17.6v3.0h-17.6zM254.4 279.0h17.6v3.0h-17.6zM272.0 279.0h17.6v3.0h-17.6zM272.0 276.0h17.6v3.0h-17.6zM289.5 279.0h17.6v3.0h-17.6zM307.1 279.0h17.6v3.0h-17.6zM324.7 279.0h17.6v3.0h-17.6zM342.2 279.0h17.6v3.0h-17.6zM359.8 279.0h17.6v3.0h-17.6zM359.8 276.0h17.6v3.0h-17.6zM377.4 279.0h17.6v3.0h-17.6zM394.9 279.0h17.6v3.0h-17.6zM394.9 276.0h17.6v3.0h-17.6zM412.5 279.0h17.6v3.0h-17.6zM412.5 276.0h17.6v3.0h-17.6zM430.1 282.0h17.6v3.0h-17.6zM447.7 282.0h17.6v3.0h-17.6zM465.2 282.0h17.6v3.0h-17.6zM482.8 282.0h17.6v3.0h-17.6zM500.4 282.0h17.6v3.0h-17.6zM517.9 282.0h17.6v3.0h-17.6zM535.5 282.0h17.6v3.0h-17.6zM553.1 282.0h17.6v3.0h-17.6zM570.6 282.0h17.6v3.0h-17.6zM588.2 282.0h17.6v3.0h-17.6zM605.8 282.0h17.6v3.0h-17.6zM623.4 282.0h17.6v3.0h-17.6zM640.9 282.0h17.6v3.0h-17.6zM658.5 282.0h17.6v3.0h-17.6zM676.1 282.0h17.6v3.0h-17.6zM693.6 282.0h17.6v3.0h-17.6zM711.2 282.0h17.6v3.0h-17.6zM728.8 282.0h17.6v3.0h-17.6zM746.3 282.0h17.6v3.0h-17.6zM763.9 282.0h17.6v3.0h-17.6zM781.5 282.0h17.6v3.0h-17.6zM799.1 282.0h17.6v3.0h-17.6zM816.6 282.0h17.6v3.0h-17.6zM834.2 282.0h17.6v3.0h-17.6zM851.8 282.0h17.6v3.0h-17.6zM869.3 282.0h17.6v3.0h-17.6zM886.9 282.0h17.6v3.0h-17.6zM904.5 282.0h17.6v3.0h-17.6zM922.0 282.0h17.6v3.0h-17.6zM939.6 282.0h17.6v3.0h-17.6zM957.2 282.0h17.6v3.0h-17.6zM974.8 282.0h17.6v3.0h-17.6zM992.3 282.0h17.6v3.0h-17.6zM1009.9 282.0h17.6v3.0h-17.6zM1027.5 282.0h17.6v3.0h-17.6zM1045.0 282.0h17.6v3.0h-17.6zM1062.6 282.0h17.6v3.0h-17.6zM1080.2 282.0h17.6v3.0h-17.6zM1097.7 282.0h17.6v3.0h-17.6zM1115.3 282.0h17.6v3.0h-17.6zM1132.9 282.0h17.6v3.0h-17.6zM1150.4 282.0h17.6v3.0h-17.6zM1168.0 282.0h17.6v3.0h-17.6zM1185.6 282.0h17.6v3.0h-17.6zM1203.2 282.0h17.6v3.0h-17.6zM1220.7 282.0h17.6v3.0h-17.6zM1238.3 282.0h17.6v3.0h-17.6zM1255.9 282.0h17.6v3.0h-17.6zM1273.4 282.0h17.6v3.0h-17.6zM1291.0 282.0h17.6v3.0h-17.6zM1308.6 282.0h17.6v3.0h-17.6zM1326.2 282.0h17.6v3.0h-17.6zM1343.7 282.0h17.6v3.0h-17.6zM1361.3 282.0h17.6v3.0h-17.6zM1378.9 282.0h17.6v3.0h-17.6zM1396.4 282.0h17.6v3.0h-17.6zM1414.0 282.0h17.6v3.0h-17.6zM1431.6 282.0h17.6v3.0h-17.6zM1431.6 283.5h17.6v1.5h-17.6zM1449.1 282.0h17.6v3.0h-17.6zM1466.7 282.0h17.6v3.0h-17.6zM1484.3 282.0h17.6v3.0h-17.6zM1501.9 282.0h17.6v3.0h-17.6zM1501.9 283.5h17.6v1.5h-17.6zM1519.4 282.0h17.6v3.0h-17.6zM1519.4 283.5h17.6v1.5h-17.6zM1537.0 282.0h17.6v3.0h-17.6zM1537.0 283.5h17.6v1.5h-17.6zM1554.6 282.0h17.6v3.0h-17.6zM1572.1 282.0h17.6v3.0h-17.6zM1589.7 282.0h17.6v3.0h-17.6zM1607.3 282.0h17.6v3.0h-17.6zM1624.8 282.0h17.6v3.0h-17.6zM1624.8 283.5h17.6v1.5h-17.6zM1642.4 282.0h17.6v3.0h-17.6zM1660.0 282.0h17.6v3.0h-17.6zM1660.0 283.5h17.6v1.5h-17.6zM1677.6 282.0h17.6v3.0h-17.6zM1695.1 282.0h17.6v3.0h-17.6zM1695.1 283.5h17.6v1.5h-17.6zM1712.7 282.0h17.6v3.0h-17.6zM1730.3 282.0h17.6v3.0h-17.6zM1730.3 283.5h17.6v1.5h-17.6zM1747.8 282.0h17.6v3.0h-17.6zM1765.4 282.0h17.6v3.0h-17.6zM1765.4 283.5h17.6v1.5h-17.6zM1783.0 282.0h17.6v3.0h-17.6zM1800.5 282.0h17.6v3.0h-17.6zM1800.5 283.5h17.6v1.5h-17.6zM1818.1 282.0h17.6v3.0h-17.6zM1835.7 282.0h17.6v3.0h-17.6zM1853.2 282.0h17.6v3.0h-17.6zM1870.8 282.0h17.6v3.0h-17.6zM1870.8 283.5h17.6v1.5h-17.6zM1888.4 282.0h17.6v3.0h-17.6zM1906.0 282.0h17.6v3.0h-17.6zM1923.5 282.0h17.6v3.0h-17.6zM1941.1 282.0h17.6v3.0h-17.6zM1958.7 282.0h17.6v3.0h-17.6zM1976.2 282.0h17.6v3.0h-17.6zM1976.2 283.5h17.6v1.5h-17.6zM1993.8 282.0h17.6v3.0h-17.6zM2011.4 282.0h17.6v3.0h-17.6zM2028.9 282.0h17.6v3.0h-17.6zM2028.9 283.5h17.6v1.5h-17.6zM2046.5 282.0h17.6v3.0h-17.6zM2064.1 282.0h17.6v3.0h-17.6zM2081.7 282.0h17.6v3.0h-17.6zM2099.2 282.0h17.6v3.0h-17.6zM2116.8 282.0h17.6v3.0h-17.6zM2116.8 283.5h17.6v1.5h-17.6zM2134.4 282.0h17.6v3.0h-17.6zM2151.9 282.0h17.6v3.0h-17.6zM2151.9 283.5h17.6v1.5h-17.6zM2169.5 282.0h17.6v3.0h-17.6zM2187.1 282.0h17.6v3.0h-17.6zM2187.1 283.5h17.6v1.5h-17.6zM2204.7 282.0h17.6v3.0h-17.6zM2222.2 282.0h17.6v3.0h-17.6zM2222.2 283.5h17.6v1.5h-17.6zM2239.8 282.0h17.6v3.0h-17.6zM2257.4 282.0h17.6v3.0h-17.6zM2257.4 283.5h17.6v1.5h-17.6zM2274.9 282.0h17.6v3.0h-17.6zM2292.5 282.0h17.6v3.0h-17.6zM2292.5 283.5h17.6v1.5h-17.6zM2310.1 282.0h17.6v3.0h-17.6zM2310.1 283.5h17.6v1.5h-17.6zM2327.6 282.0h17.6v3.0h-17.6zM2345.2 282.0h17.6v3.0h-17.6zM2345.2 283.5h17.6v1.5h-17.6zM2362.8 282.0h17.6v3.0h-17.6zM2362.8 283.5h17.6v1.5h-17.6zM2380.3 282.0h17.6v3.0h-17.6zM2397.9 282.0h17.6v3.0h-17.6zM2415.5 282.0h17.6v3.0h-17.6zM2415.5 283.5h17.6v1.5h-17.6zM2433.1 282.0h17.6v3.0h-17.6zM2450.6 282.0h17.6v3.0h-17.6zM2468.2 282.0h17.6v3.0h-17.6zM2468.2 283.5h17.6v1.5h-17.6zM2485.8 282.0h17.6v3.0h-17.6zM2503.3 282.0h17.6v3.0h-17.6zM2520.9 282.0h9.1v3.0h-9.1z"/><path fill="#35a874" d="M1.0 276.0h7.4v3.0h-7.4zM43.5 276.0h17.6v3.0h-17.6zM61.1 276.0h17.6v3.0h-17.6zM78.7 276.0h17.6v3.0h-17.6zM96.2 276.0h17.6v3.0h-17.6zM96.2 273.0h17.6v3.0h-17.6zM113.8 273.0h17.6v3.0h-17.6zM131.4 276.0h17.6v3.0h-17.6zM131.4 273.0h17.6v3.0h-17.6zM149.0 276.0h17.6v3.0h-17.6zM149.0 273.0h17.6v3.0h-17.6zM166.5 273.0h17.6v3.0h-17.6zM184.1 276.0h17.6v3.0h-17.6zM184.1 273.0h17.6v3.0h-17.6zM201.7 276.0h17.6v3.0h-17.6zM201.7 273.0h17.6v3.0h-17.6zM219.2 276.0h17.6v3.0h-17.6zM236.8 276.0h17.6v3.0h-17.6zM289.5 276.0h17.6v3.0h-17.6zM307.1 276.0h17.6v3.0h-17.6zM324.7 276.0h17.6v3.0h-17.6zM342.2 276.0h17.6v3.0h-17.6zM359.8 273.0h17.6v3.0h-17.6zM377.4 276.0h17.6v3.0h-17.6zM377.4 273.0h17.6v3.0h-17.6zM394.9 273.0h17.6v3.0h-17.6zM412.5 273.0h17.6v3.0h-17.6zM447.7 267.0h17.6v6.0h-17.6zM465.2 267.0h17.6v6.0h-17.6zM482.8 261.0h17.6v6.0h-17.6zM500.4 273.0h17.6v6.0h-17.6zM500.4 261.0h17.6v6.0h-17.6zM517.9 261.0h17.6v6.0h-17.6zM570.6 267.0h17.6v6.0h-17.6zM570.6 255.0h17.6v6.0h-17.6zM588.2 267.0h17.6v6.0h-17.6zM605.8 273.0h17.6v6.0h-17.6zM623.4 273.0h17.6v6.0h-17.6zM640.9 273.0h17.6v6.0h-17.6zM658.5 273.0h17.6v6.0h-17.6zM658.5 255.0h17.6v6.0h-17.6zM676.1 273.0h17.6v6.0h-17.6zM676.1 255.0h17.6v6.0h-17.6zM693.6 255.0h17.6v6.0h-17.6zM728.8 267.0h17.6v6.0h-17.6zM763.9 273.0h17.6v6.0h-17.6zM763.9 261.0h17.6v6.0h-17.6zM781.5 273.0h17.6v6.0h-17.6zM799.1 267.0h17.6v6.0h-17.6zM799.1 261.0h17.6v6.0h-17.6zM816.6 273.0h17.6v6.0h-17.6zM834.2 273.0h17.6v6.0h-17.6zM851.8 267.0h17.6v6.0h-17.6zM869.3 267.0h17.6v6.0h-17.6zM886.9 273.0h17.6v6.0h-17.6zM886.9 267.0h17.6v6.0h-17.6zM904.5 273.0h17.6v6.0h-17.6zM904.5 267.0h17.6v6.0h-17.6zM922.0 273.0h17.6v6.0h-17.6zM939.6 273.0h17.6v6.0h-17.6zM939.6 261.0h17.6v6.0h-17.6zM957.2 267.0h17.6v6.0h-17.6zM957.2 261.0h17.6v6.0h-17.6zM974.8 267.0h17.6v6.0h-17.6zM974.8 261.0h17.6v6.0h-17.6zM992.3 267.0h17.6v6.0h-17.6zM992.3 261.0h17.6v6.0h-17.6zM992.3 255.0h17.6v6.0h-17.6zM1009.9 261.0h17.6v6.0h-17.6zM1027.5 267.0h17.6v6.0h-17.6zM1027.5 255.0h17.6v6.0h-17.6zM1080.2 267.0h17.6v6.0h-17.6zM1097.7 273.0h17.6v6.0h-17.6zM1097.7 267.0h17.6v6.0h-17.6zM1168.0 273.0h17.6v6.0h-17.6zM1168.0 267.0h17.6v6.0h-17.6zM1168.0 261.0h17.6v6.0h-17.6zM1185.6 273.0h17.6v6.0h-17.6zM1185.6 267.0h17.6v6.0h-17.6zM1185.6 261.0h17.6v6.0h-17.6zM1185.6 255.0h17.6v6.0h-17.6zM1203.2 267.0h17.6v6.0h-17.6zM1203.2 261.0h17.6v6.0h-17.6zM1220.7 267.0h17.6v6.0h-17.6zM1238.3 267.0h17.6v6.0h-17.6zM1255.9 267.0h17.6v6.0h-17.6zM1273.4 267.0h17.6v6.0h-17.6zM1273.4 255.0h17.6v6.0h-17.6zM1326.2 267.0h17.6v6.0h-17.6zM1378.9 261.0h17.6v6.0h-17.6zM1414.0 261.0h17.6v6.0h-17.6z"/><path fill="#25947d" d="M1.0 273.0h7.4v3.0h-7.4zM1.0 255.0h7.4v6.0h-7.4zM8.4 273.0h17.6v3.0h-17.6zM26.0 273.0h17.6v3.0h-17.6zM26.0 267.0h17.6v6.0h-17.6zM43.5 273.0h17.6v3.0h-17.6zM43.5 267.0h17.6v6.0h-17.6zM43.5 261.0h17.6v6.0h-17.6zM61.1 273.0h17.6v3.0h-17.6zM61.1 261.0h17.6v6.0h-17.6zM78.7 273.0h17.6v3.0h-17.6zM96.2 267.0h17.6v6.0h-17.6zM96.2 255.0h17.6v6.0h-17.6zM113.8 267.0h17.6v6.0h-17.6zM201.7 267.0h17.6v6.0h-17.6zM201.7 255.0h17.6v6.0h-17.6zM219.2 273.0h17.6v3.0h-17.6zM219.2 267.0h17.6v6.0h-17.6zM236.8 273.0h17.6v3.0h-17.6zM236.8 267.0h17.6v6.0h-17.6zM254.4 273.0h17.6v3.0h-17.6zM272.0 273.0h17.6v3.0h-17.6zM289.5 273.0h17.6v3.0h-17.6zM307.1 273.0h17.6v3.0h-17.6zM324.7 273.0h17.6v3.0h-17.6zM342.2 273.0h17.6v3.0h-17.6zM342.2 255.0h17.6v6.0h-17.6zM377.4 255.0h17.6v6.0h-17.6zM394.9 267.0h17.6v6.0h-17.6zM394.9 255.0h17.6v6.0h-17.6zM412.5 267.0h17.6v6.0h-17.6zM412.5 261.0h17.6v6.0h-17.6zM430.1 267.0h17.6v6.0h-17.6zM430.1 261.0h17.6v6.0h-17.6zM430.1 255.0h17.6v6.0h-17.6zM447.7 261.0h17.6v6.0h-17.6zM447.7 255.0h17.6v6.0h-17.6zM447.7 252.0h17.6v3.0h-17.6zM447.7 246.0h17.6v6.0h-17.6zM465.2 261.0h17.6v6.0h-17.6zM465.2 255.0h17.6v6.0h-17.6zM465.2 252.0h17.6v3.0h-17.6zM465.2 246.0h17.6v6.0h-17.6zM465.2 240.0h17.6v6.0h-17.6zM482.8 255.0h17.6v6.0h-17.6zM482.8 246.0h17.6v6.0h-17.6zM482.8 240.0h17.6v6.0h-17.6zM500.4 255.0h17.6v6.0h-17.6zM500.4 246.0h17.6v6.0h-17.6zM500.4 240.0h17.6v6.0h-17.6zM517.9 273.0h17.6v6.0h-17.6zM517.9 255.0h17.6v6.0h-17.6zM517.9 246.0h17.6v6.0h-17.6zM517.9 240.0h17.6v6.0h-17.6zM535.5 273.0h17.6v6.0h-17.6zM553.1 273.0h17.6v6.0h-17.6zM553.1 267.0h17.6v6.0h-17.6zM553.1 252.0h17.6v3.0h-17.6zM570.6 273.0h17.6v6.0h-17.6zM588.2 255.0h17.6v6.0h-17.6zM605.8 255.0h17.6v6.0h-17.6zM605.8 252.0h17.6v3.0h-17.6zM623.4 261.0h17.6v6.0h-17.6zM623.4 252.0h17.6v3.0h-17.6zM640.9 267.0h17.6v6.0h-17.6zM640.9 261.0h17.6v6.0h-17.6zM640.9 252.0h17.6v3.0h-17.6zM658.5 267.0h17.6v6.0h-17.6zM658.5 252.0h17.6v3.0h-17.6zM676.1 267.0h17.6v6.0h-17.6zM676.1 261.0h17.6v6.0h-17.6zM676.1 240.0h17.6v6.0h-17.6zM693.6 267.0h17.6v6.0h-17.6zM693.6 261.0h17.6v6.0h-17.6zM693.6 240.0h17.6v6.0h-17.6zM711.2 261.0h17.6v6.0h-17.6zM711.2 255.0h17.6v6.0h-17.6zM711.2 252.0h17.6v3.0h-17.6zM711.2 240.0h17.6v6.0h-17.6zM728.8 261.0h17.6v6.0h-17.6zM728.8 255.0h17.6v6.0h-17.6zM728.8 252.0h17.6v3.0h-17.6zM746.3 261.0h17.6v6.0h-17.6zM746.3 255.0h17.6v6.0h-17.6zM746.3 252.0h17.6v3.0h-17.6zM763.9 255.0h17.6v6.0h-17.6zM781.5 252.0h17.6v3.0h-17.6zM816.6 246.0h17.6v6.0h-17.6zM834.2 261.0h17.6v6.0h-17.6zM834.2 255.0h17.6v6.0h-17.6zM834.2 252.0h17.6v3.0h-17.6zM834.2 246.0h17.6v6.0h-17.6zM851.8 261.0h17.6v6.0h-17.6zM851.8 255.0h17.6v6.0h-17.6zM869.3 261.0h17.6v6.0h-17.6zM869.3 255.0h17.6v6.0h-17.6zM869.3 240.0h17.6v6.0h-17.6zM886.9 261.0h17.6v6.0h-17.6zM886.9 255.0h17.6v6.0h-17.6zM886.9 240.0h17.6v6.0h-17.6zM904.5 240.0h17.6v6.0h-17.6zM922.0 252.0h17.6v3.0h-17.6zM922.0 240.0h17.6v6.0h-17.6zM939.6 267.0h17.6v6.0h-17.6zM939.6 240.0h17.6v6.0h-17.6zM957.2 240.0h17.6v6.0h-17.6zM1009.9 240.0h17.6v6.0h-17.6zM1027.5 261.0h17.6v6.0h-17.6zM1027.5 240.0h17.6v6.0h-17.6zM1045.0 261.0h17.6v6.0h-17.6zM1062.6 261.0h17.6v6.0h-17.6zM1062.6 246.0h17.6v6.0h-17.6zM1080.2 261.0h17.6v6.0h-17.6zM1097.7 261.0h17.6v6.0h-17.6zM1115.3 261.0h17.6v6.0h-17.6zM1115.3 252.0h17.6v3.0h-17.6zM1132.9 261.0h17.6v6.0h-17.6zM1132.9 252.0h17.6v3.0h-17.6zM1150.4 261.0h17.6v6.0h-17.6zM1150.4 255.0h17.6v6.0h-17.6zM1150.4 252.0h17.6v3.0h-17.6zM1150.4 240.0h17.6v6.0h-17.6zM1168.0 255.0h17.6v6.0h-17.6zM1168.0 252.0h17.6v3.0h-17.6zM1185.6 252.0h17.6v3.0h-17.6zM1185.6 240.0h17.6v6.0h-17.6zM1203.2 255.0h17.6v6.0h-17.6zM1203.2 240.0h17.6v6.0h-17.6zM1220.7 261.0h17.6v6.0h-17.6zM1220.7 255.0h17.6v6.0h-17.6zM1238.3 273.0h17.6v6.0h-17.6zM1238.3 261.0h17.6v6.0h-17.6zM1238.3 255.0h17.6v6.0h-17.6zM1255.9 273.0h17.6v6.0h-17.6zM1255.9 261.0h17.6v6.0h-17.6zM1255.9 255.0h17.6v6.0h-17.6zM1255.9 240.0h17.6v6.0h-17.6zM1273.4 273.0h17.6v6.0h-17.6zM1291.0 273.0h17.6v6.0h-17.6zM1291.0 267.0h17.6v6.0h-17.6zM1291.0 255.0h17.6v6.0h-17.6zM1308.6 273.0h17.6v6.0h-17.6zM1308.6 267.0h17.6v6.0h-17.6zM1308.6 255.0h17.6v6.0h-17.6zM1326.2 273.0h17.6v6.0h-17.6zM1326.2 255.0h17.6v6.0h-17.6zM1343.7 273.0h17.6v6.0h-17.6zM1343.7 267.0h17.6v6.0h-17.6zM1343.7 261.0h17.6v6.0h-17.6zM1343.7 255.0h17.6v6.0h-17.6zM1361.3 273.0h17.6v6.0h-17.6zM1361.3 267.0h17.6v6.0h-17.6zM1361.3 261.0h17.6v6.0h-17.6zM1361.3 255.0h17.6v6.0h-17.6zM1361.3 252.0h17.6v3.0h-17.6zM1378.9 267.0h17.6v6.0h-17.6zM1378.9 255.0h17.6v6.0h-17.6zM1378.9 252.0h17.6v3.0h-17.6zM1396.4 261.0h17.6v6.0h-17.6zM1396.4 255.0h17.6v6.0h-17.6zM1396.4 252.0h17.6v3.0h-17.6zM1414.0 255.0h17.6v6.0h-17.6zM1414.0 252.0h17.6v3.0h-17.6z"/><path fill="#22837f" d="M1.0 267.0h7.4v6.0h-7.4zM1.0 261.0h7.4v6.0h-7.4zM1.0 252.0h7.4v3.0h-7.4zM1.0 246.0h7.4v6.0h-7.4zM1.0 240.0h7.4v6.0h-7.4zM8.4 267.0h17.6v6.0h-17.6zM8.4 261.0h17.6v6.0h-17.6zM8.4 255.0h17.6v6.0h-17.6zM8.4 252.0h17.6v3.0h-17.6zM26.0 261.0h17.6v6.0h-17.6zM26.0 255.0h17.6v6.0h-17.6zM26.0 252.0h17.6v3.0h-17.6zM26.0 246.0h17.6v6.0h-17.6zM43.5 255.0h17.6v6.0h-17.6zM61.1 267.0h17.6v6.0h-17.6zM61.1 255.0h17.6v6.0h-17.6zM78.7 267.0h17.6v6.0h-17.6zM78.7 261.0h17.6v6.0h-17.6zM96.2 261.0h17.6v6.0h-17.6zM96.2 252.0h17.6v3.0h-17.6zM113.8 261.0h17.6v6.0h-17.6zM113.8 255.0h17.6v6.0h-17.6zM131.4 267.0h17.6v6.0h-17.6zM131.4 261.0h17.6v6.0h-17.6zM131.4 255.0h17.6v6.0h-17.6zM149.0 267.0h17.6v6.0h-17.6zM149.0 255.0h17.6v6.0h-17.6zM149.0 252.0h17.6v3.0h-17.6zM166.5 255.0h17.6v6.0h-17.6zM166.5 252.0h17.6v3.0h-17.6zM166.5 246.0h17.6v6.0h-17.6zM166.5 240.0h17.6v6.0h-17.6zM184.1 261.0h17.6v6.0h-17.6zM184.1 255.0h17.6v6.0h-17.6zM184.1 252.0h17.6v3.0h-17.6zM201.7 261.0h17.6v6.0h-17.6zM201.7 252.0h17.6v3.0h-17.6zM219.2 255.0h17.6v6.0h-17.6zM219.2 252.0h17.6v3.0h-17.6zM236.8 255.0h17.6v6.0h-17.6zM236.8 252.0h17.6v3.0h-17.6zM254.4 267.0h17.6v6.0h-17.6zM254.4 261.0h17.6v6.0h-17.6zM254.4 255.0h17.6v6.0h-17.6zM254.4 252.0h17.6v3.0h-17.6zM272.0 267.0h17.6v6.0h-17.6zM272.0 261.0h17.6v6.0h-17.6zM272.0 255.0h17.6v6.0h-17.6zM272.0 252.0h17.6v3.0h-17.6zM289.5 267.0h17.6v6.0h-17.6zM289.5 261.0h17.6v6.0h-17.6zM289.5 255.0h17.6v6.0h-17.6zM289.5 252.0h17.6v3.0h-17.6zM289.5 240.0h17.6v6.0h-17.6zM307.1 267.0h17.6v6.0h-17.6zM307.1 261.0h17.6v6.0h-17.6zM307.1 255.0h17.6v6.0h-17.6zM307.1 252.0h17.6v3.0h-17.6zM307.1 240.0h17.6v6.0h-17.6zM324.7 261.0h17.6v6.0h-17.6zM324.7 255.0h17.6v6.0h-17.6zM324.7 252.0h17.6v3.0h-17.6zM324.7 240.0h17.6v6.0h-17.6zM342.2 261.0h17.6v6.0h-17.6zM359.8 261.0h17.6v6.0h-17.6zM359.8 255.0h17.6v6.0h-17.6zM359.8 252.0h17.6v3.0h-17.6zM377.4 261.0h17.6v6.0h-17.6zM377.4 252.0h17.6v3.0h-17.6zM394.9 261.0h17.6v6.0h-17.6zM394.9 252.0h17.6v3.0h-17.6zM430.1 240.0h17.6v6.0h-17.6zM430.1 237.0h17.6v3.0h-17.6zM447.7 240.0h17.6v6.0h-17.6zM447.7 237.0h17.6v3.0h-17.6zM465.2 237.0h17.6v3.0h-17.6zM482.8 267.0h17.6v6.0h-17.6zM482.8 252.0h17.6v3.0h-17.6zM482.8 237.0h17.6v3.0h-17.6zM500.4 267.0h17.6v6.0h-17.6zM500.4 252.0h17.6v3.0h-17.6zM500.4 237.0h17.6v3.0h-17.6zM517.9 267.0h17.6v6.0h-17.6zM517.9 252.0h17.6v3.0h-17.6zM517.9 237.0h17.6v3.0h-17.6zM535.5 267.0h17.6v6.0h-17.6zM535.5 261.0h17.6v6.0h-17.6zM535.5 255.0h17.6v6.0h-17.6zM535.5 252.0h17.6v3.0h-17.6zM535.5 240.0h17.6v6.0h-17.6zM535.5 237.0h17.6v3.0h-17.6zM553.1 261.0h17.6v6.0h-17.6zM553.1 255.0h17.6v6.0h-17.6zM553.1 246.0h17.6v6.0h-17.6zM553.1 240.0h17.6v6.0h-17.6zM553.1 237.0h17.6v3.0h-17.6zM570.6 261.0h17.6v6.0h-17.6zM570.6 252.0h17.6v3.0h-17.6zM570.6 246.0h17.6v6.0h-17.6zM570.6 240.0h17.6v6.0h-17.6zM570.6 237.0h17.6v3.0h-17.6zM588.2 261.0h17.6v6.0h-17.6zM588.2 252.0h17.6v3.0h-17.6zM588.2 246.0h17.6v6.0h-17.6zM588.2 237.0h17.6v3.0h-17.6zM605.8 267.0h17.6v6.0h-17.6zM605.8 261.0h17.6v6.0h-17.6zM605.8 246.0h17.6v6.0h-17.6zM605.8 237.0h17.6v3.0h-17.6zM623.4 267.0h17.6v6.0h-17.6zM623.4 255.0h17.6v6.0h-17.6zM623.4 246.0h17.6v6.0h-17.6zM623.4 240.0h17.6v6.0h-17.6zM623.4 237.0h17.6v3.0h-17.6zM640.9 255.0h17.6v6.0h-17.6zM640.9 246.0h17.6v6.0h-17.6zM658.5 261.0h17.6v6.0h-17.6zM676.1 252.0h17.6v3.0h-17.6zM693.6 252.0h17.6v3.0h-17.6zM693.6 237.0h17.6v3.0h-17.6zM711.2 267.0h17.6v6.0h-17.6zM711.2 246.0h17.6v6.0h-17.6zM711.2 237.0h17.6v3.0h-17.6zM728.8 240.0h17.6v6.0h-17.6zM746.3 267.0h17.6v6.0h-17.6zM746.3 240.0h17.6v6.0h-17.6zM763.9 267.0h17.6v6.0h-17.6zM763.9 252.0h17.6v3.0h-17.6zM763.9 240.0h17.6v6.0h-17.6zM781.5 267.0h17.6v6.0h-17.6zM781.5 261.0h17.6v6.0h-17.6zM781.5 255.0h17.6v6.0h-17.6zM781.5 246.0h17.6v6.0h-17.6zM781.5 240.0h17.6v6.0h-17.6zM799.1 255.0h17.6v6.0h-17.6zM799.1 252.0h17.6v3.0h-17.6zM799.1 246.0h17.6v6.0h-17.6zM799.1 240.0h17.6v6.0h-17.6zM816.6 267.0h17.6v6.0h-17.6zM816.6 261.0h17.6v6.0h-17.6zM816.6 255.0h17.6v6.0h-17.6zM816.6 252.0h17.6v3.0h-17.6zM816.6 240.0h17.6v6.0h-17.6zM816.6 237.0h17.6v3.0h-17.6zM834.2 267.0h17.6v6.0h-17.6zM834.2 237.0h17.6v3.0h-17.6zM851.8 252.0h17.6v3.0h-17.6zM851.8 237.0h17.6v3.0h-17.6zM869.3 252.0h17.6v3.0h-17.6zM869.3 237.0h17.6v3.0h-17.6zM886.9 252.0h17.6v3.0h-17.6zM886.9 246.0h17.6v6.0h-17.6zM904.5 261.0h17.6v6.0h-17.6zM904.5 255.0h17.6v6.0h-17.6zM904.5 252.0h17.6v3.0h-17.6zM904.5 246.0h17.6v6.0h-17.6zM904.5 237.0h17.6v3.0h-17.6zM922.0 267.0h17.6v6.0h-17.6zM922.0 261.0h17.6v6.0h-17.6zM922.0 255.0h17.6v6.0h-17.6zM922.0 246.0h17.6v6.0h-17.6zM922.0 237.0h17.6v3.0h-17.6zM939.6 255.0h17.6v6.0h-17.6zM939.6 252.0h17.6v3.0h-17.6zM939.6 246.0h17.6v6.0h-17.6zM939.6 237.0h17.6v3.0h-17.6zM957.2 255.0h17.6v6.0h-17.6zM957.2 252.0h17.6v3.0h-17.6zM957.2 246.0h17.6v6.0h-17.6zM957.2 237.0h17.6v3.0h-17.6zM974.8 255.0h17.6v6.0h-17.6zM974.8 252.0h17.6v3.0h-17.6zM974.8 246.0h17.6v6.0h-17.6zM974.8 240.0h17.6v6.0h-17.6zM974.8 237.0h17.6v3.0h-17.6zM992.3 252.0h17.6v3.0h-17.6zM992.3 246.0h17.6v6.0h-17.6zM992.3 240.0h17.6v6.0h-17.6zM992.3 237.0h17.6v3.0h-17.6zM1009.9 267.0h17.6v6.0h-17.6zM1009.9 255.0h17.6v6.0h-17.6zM1009.9 252.0h17.6v3.0h-17.6zM1009.9 246.0h17.6v6.0h-17.6zM1009.9 237.0h17.6v3.0h-17.6zM1027.5 252.0h17.6v3.0h-17.6zM1027.5 246.0h17.6v6.0h-17.6zM1027.5 237.0h17.6v3.0h-17.6zM1045.0 267.0h17.6v6.0h-17.6zM1045.0 255.0h17.6v6.0h-17.6zM1045.0 252.0h17.6v3.0h-17.6zM1045.0 246.0h17.6v6.0h-17.6zM1045.0 240.0h17.6v6.0h-17.6zM1045.0 237.0h17.6v3.0h-17.6zM1062.6 267.0h17.6v6.0h-17.6zM1062.6 255.0h17.6v6.0h-17.6zM1062.6 252.0h17.6v3.0h-17.6zM1062.6 240.0h17.6v6.0h-17.6zM1062.6 237.0h17.6v3.0h-17.6zM1080.2 255.0h17.6v6.0h-17.6zM1080.2 252.0h17.6v3.0h-17.6zM1080.2 246.0h17.6v6.0h-17.6zM1080.2 240.0h17.6v6.0h-17.6zM1080.2 237.0h17.6v3.0h-17.6zM1097.7 255.0h17.6v6.0h-17.6zM1097.7 252.0h17.6v3.0h-17.6zM1115.3 267.0h17.6v6.0h-17.6zM1115.3 255.0h17.6v6.0h-17.6zM1132.9 267.0h17.6v6.0h-17.6zM1132.9 255.0h17.6v6.0h-17.6zM1132.9 237.0h17.6v3.0h-17.6zM1150.4 267.0h17.6v6.0h-17.6zM1150.4 237.0h17.6v3.0h-17.6zM1168.0 237.0h17.6v3.0h-17.6zM1185.6 237.0h17.6v3.0h-17.6zM1203.2 252.0h17.6v3.0h-17.6zM1203.2 237.0h17.6v3.0h-17.6zM1220.7 252.0h17.6v3.0h-17.6zM1220.7 240.0h17.6v6.0h-17.6zM1220.7 237.0h17.6v3.0h-17.6zM1238.3 252.0h17.6v3.0h-17.6zM1255.9 252.0h17.6v3.0h-17.6zM1255.9 246.0h17.6v6.0h-17.6zM1255.9 237.0h17.6v3.0h-17.6zM1273.4 261.0h17.6v6.0h-17.6zM1273.4 252.0h17.6v3.0h-17.6zM1273.4 246.0h17.6v6.0h-17.6zM1273.4 240.0h17.6v6.0h-17.6zM1273.4 237.0h17.6v3.0h-17.6zM1291.0 261.0h17.6v6.0h-17.6zM1291.0 252.0h17.6v3.0h-17.6zM1291.0 246.0h17.6v6.0h-17.6zM1291.0 240.0h17.6v6.0h-17.6zM1291.0 237.0h17.6v3.0h-17.6zM1308.6 261.0h17.6v6.0h-17.6zM1308.6 252.0h17.6v3.0h-17.6zM1326.2 261.0h17.6v6.0h-17.6zM1326.2 252.0h17.6v3.0h-17.6zM1343.7 252.0h17.6v3.0h-17.6zM1343.7 246.0h17.6v6.0h-17.6zM1378.9 246.0h17.6v6.0h-17.6zM1378.9 237.0h17.6v3.0h-17.6zM1396.4 267.0h17.6v6.0h-17.6zM1396.4 246.0h17.6v6.0h-17.6zM1414.0 267.0h17.6v6.0h-17.6zM1414.0 246.0h17.6v6.0h-17.6zM1414.0 237.0h17.6v3.0h-17.6z"/><path fill="#394a7c" d="M1.0 237.0h7.4v3.0h-7.4zM1.0 234.0h7.4v3.0h-7.4zM1.0 192.0h7.4v3.0h-7.4zM8.4 240.0h17.6v6.0h-17.6zM8.4 237.0h17.6v3.0h-17.6zM8.4 198.0h17.6v3.0h-17.6zM8.4 192.0h17.6v3.0h-17.6zM26.0 240.0h17.6v6.0h-17.6zM26.0 231.0h17.6v3.0h-17.6zM26.0 195.0h17.6v3.0h-17.6zM43.5 240.0h17.6v6.0h-17.6zM43.5 237.0h17.6v3.0h-17.6zM61.1 240.0h17.6v6.0h-17.6zM61.1 237.0h17.6v3.0h-17.6zM61.1 231.0h17.6v3.0h-17.6zM78.7 246.0h17.6v6.0h-17.6zM78.7 240.0h17.6v6.0h-17.6zM78.7 237.0h17.6v3.0h-17.6zM78.7 231.0h17.6v3.0h-17.6zM78.7 192.0h17.6v3.0h-17.6zM96.2 240.0h17.6v6.0h-17.6zM96.2 237.0h17.6v3.0h-17.6zM96.2 201.0h17.6v3.0h-17.6zM113.8 240.0h17.6v6.0h-17.6zM113.8 234.0h17.6v3.0h-17.6zM113.8 231.0h17.6v3.0h-17.6zM131.4 237.0h17.6v3.0h-17.6zM131.4 195.0h17.6v3.0h-17.6zM149.0 240.0h17.6v6.0h-17.6zM149.0 234.0h17.6v3.0h-17.6zM149.0 207.0h17.6v3.0h-17.6zM166.5 237.0h17.6v3.0h-17.6zM166.5 216.0h17.6v3.0h-17.6zM184.1 237.0h17.6v3.0h-17.6zM184.1 198.0h17.6v3.0h-17.6zM201.7 240.0h17.6v6.0h-17.6zM201.7 237.0h17.6v3.0h-17.6zM201.7 234.0h17.6v3.0h-17.6zM201.7 219.0h17.6v3.0h-17.6zM219.2 240.0h17.6v6.0h-17.6zM219.2 207.0h17.6v3.0h-17.6zM236.8 240.0h17.6v6.0h-17.6zM236.8 225.0h17.6v3.0h-17.6zM236.8 198.0h17.6v3.0h-17.6zM236.8 186.0h17.6v3.0h-17.6zM254.4 237.0h17.6v3.0h-17.6zM254.4 228.0h17.6v3.0h-17.6zM254.4 216.0h17.6v3.0h-17.6zM254.4 198.0h17.6v3.0h-17.6zM272.0 237.0h17.6v3.0h-17.6zM272.0 228.0h17.6v3.0h-17.6zM272.0 192.0h17.6v3.0h-17.6zM307.1 246.0h17.6v6.0h-17.6zM307.1 237.0h17.6v3.0h-17.6zM324.7 237.0h17.6v3.0h-17.6zM324.7 234.0h17.6v3.0h-17.6zM324.7 231.0h17.6v3.0h-17.6zM324.7 216.0h17.6v6.0h-17.6zM342.2 231.0h17.6v3.0h-17.6zM342.2 180.0h17.6v3.0h-17.6zM359.8 228.0h17.6v3.0h-17.6zM359.8 222.0h17.6v3.0h-17.6zM359.8 213.0h17.6v3.0h-17.6zM377.4 240.0h17.6v6.0h-17.6zM377.4 234.0h17.6v3.0h-17.6zM394.9 240.0h17.6v6.0h-17.6zM394.9 231.0h17.6v3.0h-17.6zM394.9 228.0h17.6v3.0h-17.6zM394.9 219.0h17.6v3.0h-17.6zM412.5 240.0h17.6v6.0h-17.6zM412.5 234.0h17.6v3.0h-17.6zM412.5 228.0h17.6v3.0h-17.6zM412.5 216.0h17.6v3.0h-17.6zM412.5 213.0h17.6v3.0h-17.6zM412.5 207.0h17.6v3.0h-17.6zM447.7 228.0h17.6v3.0h-17.6zM447.7 213.0h17.6v6.0h-17.6zM447.7 195.0h17.6v3.0h-17.6zM465.2 231.0h17.6v3.0h-17.6zM465.2 210.0h17.6v3.0h-17.6zM465.2 198.0h17.6v3.0h-17.6zM482.8 228.0h17.6v3.0h-17.6zM482.8 219.0h17.6v3.0h-17.6zM500.4 279.0h17.6v3.0h-17.6zM500.4 228.0h17.6v3.0h-17.6zM500.4 213.0h17.6v3.0h-17.6zM500.4 210.0h17.6v3.0h-17.6zM500.4 201.0h17.6v3.0h-17.6zM500.4 198.0h17.6v3.0h-17.6zM517.9 279.0h17.6v3.0h-17.6zM517.9 231.0h17.6v3.0h-17.6zM517.9 228.0h17.6v3.0h-17.6zM535.5 231.0h17.6v3.0h-17.6zM535.5 213.0h17.6v3.0h-17.6zM535.5 129.0h17.6v3.0h-17.6zM553.1 195.0h17.6v3.0h-17.6zM570.6 222.0h17.6v3.0h-17.6zM570.6 204.0h17.6v6.0h-17.6zM605.8 210.0h17.6v6.0h-17.6zM605.8 195.0h17.6v3.0h-17.6zM623.4 201.0h17.6v3.0h-17.6zM623.4 198.0h17.6v3.0h-17.6zM640.9 279.0h17.6v3.0h-17.6zM640.9 228.0h17.6v3.0h-17.6zM640.9 198.0h17.6v3.0h-17.6zM658.5 234.0h17.6v3.0h-17.6zM658.5 225.0h17.6v3.0h-17.6zM658.5 195.0h17.6v3.0h-17.6zM676.1 195.0h17.6v3.0h-17.6zM693.6 192.0h17.6v3.0h-17.6zM711.2 234.0h17.6v3.0h-17.6zM711.2 228.0h17.6v3.0h-17.6zM711.2 222.0h17.6v3.0h-17.6zM728.8 195.0h17.6v3.0h-17.6zM728.8 192.0h17.6v3.0h-17.6zM763.9 213.0h17.6v3.0h-17.6zM781.5 234.0h17.6v3.0h-17.6zM781.5 195.0h17.6v3.0h-17.6zM816.6 234.0h17.6v3.0h-17.6zM816.6 231.0h17.6v3.0h-17.6zM816.6 198.0h17.6v3.0h-17.6zM834.2 201.0h17.6v3.0h-17.6zM834.2 195.0h17.6v3.0h-17.6zM869.3 234.0h17.6v3.0h-17.6zM886.9 279.0h17.6v3.0h-17.6zM886.9 192.0h17.6v3.0h-17.6zM904.5 231.0h17.6v3.0h-17.6zM904.5 198.0h17.6v3.0h-17.6zM922.0 231.0h17.6v3.0h-17.6zM939.6 231.0h17.6v3.0h-17.6zM939.6 204.0h17.6v3.0h-17.6zM939.6 198.0h17.6v3.0h-17.6zM939.6 195.0h17.6v3.0h-17.6zM974.8 228.0h17.6v3.0h-17.6zM992.3 279.0h17.6v3.0h-17.6zM992.3 201.0h17.6v3.0h-17.6zM1009.9 210.0h17.6v3.0h-17.6zM1009.9 192.0h17.6v3.0h-17.6zM1027.5 228.0h17.6v3.0h-17.6zM1027.5 198.0h17.6v3.0h-17.6zM1045.0 192.0h17.6v3.0h-17.6zM1062.6 213.0h17.6v3.0h-17.6zM1115.3 279.0h17.6v3.0h-17.6zM1115.3 231.0h17.6v3.0h-17.6zM1115.3 213.0h17.6v3.0h-17.6zM1115.3 210.0h17.6v3.0h-17.6zM1132.9 228.0h17.6v3.0h-17.6zM1132.9 201.0h17.6v3.0h-17.6zM1132.9 198.0h17.6v3.0h-17.6zM1150.4 279.0h17.6v3.0h-17.6zM1150.4 234.0h17.6v3.0h-17.6zM1150.4 201.0h17.6v3.0h-17.6zM1150.4 198.0h17.6v3.0h-17.6zM1168.0 234.0h17.6v3.0h-17.6zM1168.0 231.0h17.6v3.0h-17.6zM1168.0 216.0h17.6v3.0h-17.6zM1185.6 198.0h17.6v3.0h-17.6zM1185.6 192.0h17.6v3.0h-17.6zM1203.2 231.0h17.6v3.0h-17.6zM1203.2 195.0h17.6v3.0h-17.6zM1203.2 192.0h17.6v3.0h-17.6zM1220.7 231.0h17.6v3.0h-17.6zM1220.7 201.0h17.6v3.0h-17.6zM1220.7 198.0h17.6v3.0h-17.6zM1238.3 198.0h17.6v3.0h-17.6zM1238.3 129.0h17.6v3.0h-17.6zM1255.9 210.0h17.6v3.0h-17.6zM1273.4 195.0h17.6v3.0h-17.6zM1291.0 225.0h17.6v3.0h-17.6zM1326.2 213.0h17.6v3.0h-17.6zM1343.7 198.0h17.6v3.0h-17.6zM1361.3 198.0h17.6v3.0h-17.6zM1378.9 279.0h17.6v3.0h-17.6zM1378.9 228.0h17.6v3.0h-17.6zM1378.9 195.0h17.6v3.0h-17.6zM1396.4 279.0h17.6v3.0h-17.6zM1396.4 234.0h17.6v3.0h-17.6zM1396.4 198.0h17.6v3.0h-17.6zM1396.4 192.0h17.6v3.0h-17.6zM1414.0 198.0h17.6v3.0h-17.6zM1414.0 192.0h17.6v3.0h-17.6zM1431.6 279.0h17.6v3.0h-17.6zM1431.6 276.0h17.6v3.0h-17.6zM1431.6 270.0h17.6v3.0h-17.6zM1431.6 267.0h17.6v3.0h-17.6zM1431.6 264.0h17.6v3.0h-17.6zM1431.6 255.0h17.6v3.0h-17.6zM1449.1 258.0h17.6v3.0h-17.6zM1449.1 255.0h17.6v3.0h-17.6zM1449.1 249.0h17.6v3.0h-17.6zM1484.3 237.0h17.6v6.0h-17.6zM1501.9 276.0h17.6v3.0h-17.6zM1537.0 279.0h17.6v3.0h-17.6zM1554.6 276.0h17.6v3.0h-17.6zM1589.7 279.0h17.6v3.0h-17.6zM1607.3 258.0h17.6v3.0h-17.6zM1642.4 279.0h17.6v3.0h-17.6zM1660.0 273.0h17.6v3.0h-17.6zM1660.0 261.0h17.6v3.0h-17.6zM1677.6 279.0h17.6v3.0h-17.6zM1712.7 279.0h17.6v3.0h-17.6zM1747.8 279.0h17.6v3.0h-17.6zM1783.0 279.0h17.6v3.0h-17.6zM1800.5 264.0h17.6v3.0h-17.6zM1835.7 252.0h17.6v3.0h-17.6zM1870.8 276.0h17.6v3.0h-17.6zM1906.0 273.0h17.6v6.0h-17.6zM1923.5 279.0h17.6v3.0h-17.6zM1958.7 240.0h17.6v3.0h-17.6zM1993.8 279.0h17.6v3.0h-17.6zM2028.9 258.0h17.6v3.0h-17.6zM2064.1 279.0h17.6v3.0h-17.6zM2134.4 279.0h17.6v3.0h-17.6zM2169.5 255.0h17.6v6.0h-17.6zM2204.7 270.0h17.6v3.0h-17.6zM2222.2 279.0h17.6v3.0h-17.6zM2274.9 279.0h17.6v3.0h-17.6zM2274.9 261.0h17.6v3.0h-17.6zM2274.9 258.0h17.6v3.0h-17.6zM2292.5 279.0h17.6v3.0h-17.6zM2327.6 249.0h17.6v3.0h-17.6zM2380.3 279.0h17.6v3.0h-17.6zM2450.6 279.0h17.6v3.0h-17.6zM2450.6 267.0h17.6v3.0h-17.6zM2503.3 249.0h17.6v3.0h-17.6zM2520.9 279.0h9.1v3.0h-9.1z"/><path fill="#2a6e85" d="M1.0 231.0h7.4v3.0h-7.4zM8.4 246.0h17.6v6.0h-17.6zM8.4 234.0h17.6v3.0h-17.6zM8.4 231.0h17.6v3.0h-17.6zM26.0 237.0h17.6v3.0h-17.6zM26.0 234.0h17.6v3.0h-17.6zM43.5 252.0h17.6v3.0h-17.6zM43.5 246.0h17.6v6.0h-17.6zM43.5 234.0h17.6v3.0h-17.6zM43.5 228.0h17.6v3.0h-17.6zM61.1 252.0h17.6v3.0h-17.6zM61.1 246.0h17.6v6.0h-17.6zM78.7 255.0h17.6v6.0h-17.6zM78.7 252.0h17.6v3.0h-17.6zM78.7 234.0h17.6v3.0h-17.6zM96.2 246.0h17.6v6.0h-17.6zM96.2 234.0h17.6v3.0h-17.6zM113.8 252.0h17.6v3.0h-17.6zM113.8 246.0h17.6v6.0h-17.6zM113.8 237.0h17.6v3.0h-17.6zM131.4 252.0h17.6v3.0h-17.6zM131.4 246.0h17.6v6.0h-17.6zM131.4 240.0h17.6v6.0h-17.6zM149.0 261.0h17.6v6.0h-17.6zM149.0 246.0h17.6v6.0h-17.6zM149.0 237.0h17.6v3.0h-17.6zM149.0 231.0h17.6v3.0h-17.6zM166.5 267.0h17.6v6.0h-17.6zM166.5 261.0h17.6v6.0h-17.6zM184.1 267.0h17.6v6.0h-17.6zM184.1 246.0h17.6v6.0h-17.6zM184.1 240.0h17.6v6.0h-17.6zM184.1 234.0h17.6v3.0h-17.6zM201.7 246.0h17.6v6.0h-17.6zM219.2 261.0h17.6v6.0h-17.6zM219.2 246.0h17.6v6.0h-17.6zM219.2 237.0h17.6v3.0h-17.6zM236.8 261.0h17.6v6.0h-17.6zM236.8 246.0h17.6v6.0h-17.6zM236.8 237.0h17.6v3.0h-17.6zM254.4 246.0h17.6v6.0h-17.6zM254.4 240.0h17.6v6.0h-17.6zM272.0 246.0h17.6v6.0h-17.6zM272.0 240.0h17.6v6.0h-17.6zM289.5 246.0h17.6v6.0h-17.6zM289.5 237.0h17.6v3.0h-17.6zM289.5 228.0h17.6v3.0h-17.6zM324.7 267.0h17.6v6.0h-17.6zM324.7 246.0h17.6v6.0h-17.6zM342.2 267.0h17.6v6.0h-17.6zM342.2 252.0h17.6v3.0h-17.6zM342.2 246.0h17.6v6.0h-17.6zM342.2 240.0h17.6v6.0h-17.6zM342.2 237.0h17.6v3.0h-17.6zM342.2 234.0h17.6v3.0h-17.6zM359.8 267.0h17.6v6.0h-17.6zM359.8 246.0h17.6v6.0h-17.6zM359.8 240.0h17.6v6.0h-17.6zM359.8 237.0h17.6v3.0h-17.6zM359.8 234.0h17.6v3.0h-17.6zM377.4 267.0h17.6v6.0h-17.6zM377.4 246.0h17.6v6.0h-17.6zM377.4 237.0h17.6v3.0h-17.6zM394.9 246.0h17.6v6.0h-17.6zM394.9 237.0h17.6v3.0h-17.6zM394.9 234.0h17.6v3.0h-17.6zM412.5 255.0h17.6v6.0h-17.6zM412.5 252.0h17.6v3.0h-17.6zM412.5 246.0h17.6v6.0h-17.6zM412.5 237.0h17.6v3.0h-17.6zM412.5 231.0h17.6v3.0h-17.6zM430.1 252.0h17.6v3.0h-17.6zM430.1 246.0h17.6v6.0h-17.6zM430.1 234.0h17.6v3.0h-17.6zM447.7 234.0h17.6v3.0h-17.6zM500.4 234.0h17.6v3.0h-17.6zM535.5 246.0h17.6v6.0h-17.6zM553.1 228.0h17.6v3.0h-17.6zM588.2 240.0h17.6v6.0h-17.6zM588.2 234.0h17.6v3.0h-17.6zM588.2 231.0h17.6v3.0h-17.6zM605.8 240.0h17.6v6.0h-17.6zM640.9 240.0h17.6v6.0h-17.6zM640.9 237.0h17.6v3.0h-17.6zM658.5 246.0h17.6v6.0h-17.6zM658.5 240.0h17.6v6.0h-17.6zM658.5 237.0h17.6v3.0h-17.6zM676.1 246.0h17.6v6.0h-17.6zM676.1 237.0h17.6v3.0h-17.6zM693.6 246.0h17.6v6.0h-17.6zM693.6 228.0h17.6v3.0h-17.6zM711.2 231.0h17.6v3.0h-17.6zM728.8 246.0h17.6v6.0h-17.6zM728.8 237.0h17.6v3.0h-17.6zM728.8 231.0h17.6v3.0h-17.6zM746.3 246.0h17.6v6.0h-17.6zM746.3 237.0h17.6v3.0h-17.6zM746.3 234.0h17.6v3.0h-17.6zM746.3 228.0h17.6v3.0h-17.6zM763.9 246.0h17.6v6.0h-17.6zM763.9 237.0h17.6v3.0h-17.6zM763.9 231.0h17.6v3.0h-17.6zM763.9 228.0h17.6v3.0h-17.6zM781.5 237.0h17.6v3.0h-17.6zM799.1 237.0h17.6v3.0h-17.6zM799.1 234.0h17.6v3.0h-17.6zM816.6 228.0h17.6v3.0h-17.6zM834.2 240.0h17.6v6.0h-17.6zM834.2 234.0h17.6v3.0h-17.6zM851.8 246.0h17.6v6.0h-17.6zM851.8 240.0h17.6v6.0h-17.6zM851.8 234.0h17.6v3.0h-17.6zM869.3 246.0h17.6v6.0h-17.6zM886.9 237.0h17.6v3.0h-17.6zM886.9 234.0h17.6v3.0h-17.6zM939.6 234.0h17.6v3.0h-17.6zM992.3 234.0h17.6v3.0h-17.6zM1045.0 234.0h17.6v3.0h-17.6zM1097.7 246.0h17.6v6.0h-17.6zM1097.7 240.0h17.6v6.0h-17.6zM1097.7 237.0h17.6v3.0h-17.6zM1097.7 234.0h17.6v3.0h-17.6zM1097.7 228.0h17.6v3.0h-17.6zM1115.3 246.0h17.6v6.0h-17.6zM1115.3 240.0h17.6v6.0h-17.6zM1115.3 237.0h17.6v3.0h-17.6zM1115.3 234.0h17.6v3.0h-17.6zM1132.9 246.0h17.6v6.0h-17.6zM1132.9 240.0h17.6v6.0h-17.6zM1132.9 234.0h17.6v3.0h-17.6zM1150.4 246.0h17.6v6.0h-17.6zM1168.0 246.0h17.6v6.0h-17.6zM1168.0 240.0h17.6v6.0h-17.6zM1185.6 246.0h17.6v6.0h-17.6zM1203.2 246.0h17.6v6.0h-17.6zM1220.7 246.0h17.6v6.0h-17.6zM1220.7 234.0h17.6v3.0h-17.6zM1238.3 246.0h17.6v6.0h-17.6zM1238.3 240.0h17.6v6.0h-17.6zM1238.3 237.0h17.6v3.0h-17.6zM1255.9 234.0h17.6v3.0h-17.6zM1308.6 246.0h17.6v6.0h-17.6zM1308.6 240.0h17.6v6.0h-17.6zM1308.6 237.0h17.6v3.0h-17.6zM1326.2 246.0h17.6v6.0h-17.6zM1326.2 240.0h17.6v6.0h-17.6zM1326.2 237.0h17.6v3.0h-17.6zM1326.2 231.0h17.6v3.0h-17.6zM1343.7 240.0h17.6v6.0h-17.6zM1343.7 237.0h17.6v3.0h-17.6zM1343.7 231.0h17.6v3.0h-17.6zM1361.3 246.0h17.6v6.0h-17.6zM1361.3 240.0h17.6v6.0h-17.6zM1361.3 237.0h17.6v3.0h-17.6zM1378.9 240.0h17.6v6.0h-17.6zM1396.4 240.0h17.6v6.0h-17.6zM1396.4 237.0h17.6v3.0h-17.6zM1414.0 240.0h17.6v6.0h-17.6zM1414.0 231.0h17.6v3.0h-17.6zM1431.6 252.0h17.6v3.0h-17.6zM1501.9 279.0h17.6v3.0h-17.6zM1607.3 279.0h17.6v3.0h-17.6zM1765.4 279.0h17.6v3.0h-17.6zM1818.1 279.0h17.6v3.0h-17.6zM1853.2 279.0h17.6v3.0h-17.6zM1870.8 279.0h17.6v3.0h-17.6zM1906.0 279.0h17.6v3.0h-17.6zM1941.1 279.0h17.6v3.0h-17.6zM1958.7 279.0h17.6v3.0h-17.6zM2028.9 279.0h17.6v3.0h-17.6zM2327.6 279.0h17.6v3.0h-17.6zM2397.9 279.0h17.6v3.0h-17.6zM2433.1 279.0h17.6v3.0h-17.6zM2468.2 279.0h17.6v3.0h-17.6zM2485.8 279.0h17.6v3.0h-17.6zM2503.3 279.0h17.6v3.0h-17.6z"/><path fill="#35345a" d="M1.0 204.0h7.4v3.0h-7.4zM1.0 195.0h7.4v3.0h-7.4zM8.4 225.0h17.6v3.0h-17.6zM8.4 210.0h17.6v3.0h-17.6zM26.0 225.0h17.6v3.0h-17.6zM26.0 198.0h17.6v3.0h-17.6zM26.0 138.0h17.6v6.0h-17.6zM43.5 219.0h17.6v3.0h-17.6zM43.5 216.0h17.6v3.0h-17.6zM43.5 204.0h17.6v3.0h-17.6zM61.1 234.0h17.6v3.0h-17.6zM61.1 219.0h17.6v3.0h-17.6zM61.1 204.0h17.6v3.0h-17.6zM78.7 207.0h17.6v3.0h-17.6zM78.7 195.0h17.6v3.0h-17.6zM78.7 180.0h17.6v3.0h-17.6zM96.2 228.0h17.6v3.0h-17.6zM96.2 195.0h17.6v3.0h-17.6zM113.8 228.0h17.6v3.0h-17.6zM113.8 213.0h17.6v3.0h-17.6zM113.8 195.0h17.6v3.0h-17.6zM131.4 201.0h17.6v3.0h-17.6zM131.4 192.0h17.6v3.0h-17.6zM149.0 219.0h17.6v6.0h-17.6zM149.0 198.0h17.6v3.0h-17.6zM166.5 222.0h17.6v3.0h-17.6zM166.5 198.0h17.6v3.0h-17.6zM166.5 195.0h17.6v3.0h-17.6zM184.1 207.0h17.6v3.0h-17.6zM201.7 198.0h17.6v3.0h-17.6zM201.7 102.0h17.6v6.0h-17.6zM219.2 228.0h17.6v3.0h-17.6zM219.2 222.0h17.6v6.0h-17.6zM236.8 231.0h17.6v3.0h-17.6zM236.8 219.0h17.6v3.0h-17.6zM236.8 195.0h17.6v3.0h-17.6zM254.4 210.0h17.6v3.0h-17.6zM254.4 192.0h17.6v3.0h-17.6zM272.0 231.0h17.6v3.0h-17.6zM272.0 198.0h17.6v3.0h-17.6zM289.5 222.0h17.6v6.0h-17.6zM289.5 219.0h17.6v3.0h-17.6zM289.5 183.0h17.6v3.0h-17.6zM307.1 234.0h17.6v3.0h-17.6zM307.1 228.0h17.6v3.0h-17.6zM307.1 207.0h17.6v6.0h-17.6zM307.1 195.0h17.6v3.0h-17.6zM307.1 189.0h17.6v3.0h-17.6zM342.2 201.0h17.6v3.0h-17.6zM342.2 192.0h17.6v3.0h-17.6zM359.8 231.0h17.6v3.0h-17.6zM359.8 225.0h17.6v3.0h-17.6zM359.8 198.0h17.6v3.0h-17.6zM377.4 231.0h17.6v3.0h-17.6zM377.4 228.0h17.6v3.0h-17.6zM377.4 204.0h17.6v6.0h-17.6zM394.9 213.0h17.6v3.0h-17.6zM394.9 153.0h17.6v3.0h-17.6zM412.5 204.0h17.6v3.0h-17.6zM412.5 195.0h17.6v3.0h-17.6zM430.1 216.0h17.6v3.0h-17.6zM430.1 204.0h17.6v3.0h-17.6zM447.7 231.0h17.6v3.0h-17.6zM447.7 222.0h17.6v3.0h-17.6zM447.7 216.0h17.6v3.0h-17.6zM447.7 168.0h17.6v3.0h-17.6zM465.2 228.0h17.6v3.0h-17.6zM465.2 216.0h17.6v3.0h-17.6zM465.2 213.0h17.6v6.0h-17.6zM465.2 192.0h17.6v3.0h-17.6zM482.8 225.0h17.6v3.0h-17.6zM500.4 207.0h17.6v3.0h-17.6zM500.4 180.0h17.6v3.0h-17.6zM517.9 222.0h17.6v3.0h-17.6zM517.9 216.0h17.6v6.0h-17.6zM517.9 198.0h17.6v3.0h-17.6zM535.5 219.0h17.6v3.0h-17.6zM535.5 216.0h17.6v6.0h-17.6zM535.5 210.0h17.6v3.0h-17.6zM535.5 201.0h17.6v3.0h-17.6zM535.5 195.0h17.6v3.0h-17.6zM535.5 192.0h17.6v3.0h-17.6zM553.1 234.0h17.6v3.0h-17.6zM553.1 231.0h17.6v3.0h-17.6zM553.1 213.0h17.6v3.0h-17.6zM588.2 225.0h17.6v6.0h-17.6zM588.2 222.0h17.6v3.0h-17.6zM588.2 213.0h17.6v6.0h-17.6zM588.2 207.0h17.6v3.0h-17.6zM588.2 201.0h17.6v3.0h-17.6zM588.2 195.0h17.6v3.0h-17.6zM605.8 219.0h17.6v6.0h-17.6zM605.8 204.0h17.6v3.0h-17.6zM605.8 198.0h17.6v3.0h-17.6zM623.4 234.0h17.6v3.0h-17.6zM623.4 231.0h17.6v3.0h-17.6zM623.4 228.0h17.6v3.0h-17.6zM623.4 225.0h17.6v6.0h-17.6zM658.5 219.0h17.6v3.0h-17.6zM676.1 213.0h17.6v6.0h-17.6zM676.1 198.0h17.6v3.0h-17.6zM693.6 216.0h17.6v3.0h-17.6zM693.6 195.0h17.6v3.0h-17.6zM693.6 111.0h17.6v3.0h-17.6zM711.2 195.0h17.6v3.0h-17.6zM728.8 234.0h17.6v3.0h-17.6zM728.8 222.0h17.6v3.0h-17.6zM728.8 201.0h17.6v3.0h-17.6zM746.3 219.0h17.6v6.0h-17.6zM746.3 210.0h17.6v3.0h-17.6zM746.3 198.0h17.6v3.0h-17.6zM781.5 231.0h17.6v3.0h-17.6zM781.5 222.0h17.6v3.0h-17.6zM799.1 228.0h17.6v3.0h-17.6zM799.1 195.0h17.6v3.0h-17.6zM799.1 171.0h17.6v3.0h-17.6zM834.2 231.0h17.6v3.0h-17.6zM834.2 225.0h17.6v3.0h-17.6zM834.2 213.0h17.6v6.0h-17.6zM834.2 210.0h17.6v3.0h-17.6zM834.2 207.0h17.6v3.0h-17.6zM834.2 174.0h17.6v3.0h-17.6zM851.8 228.0h17.6v3.0h-17.6zM851.8 222.0h17.6v3.0h-17.6zM851.8 210.0h17.6v3.0h-17.6zM851.8 189.0h17.6v3.0h-17.6zM869.3 228.0h17.6v3.0h-17.6zM869.3 192.0h17.6v3.0h-17.6zM886.9 231.0h17.6v3.0h-17.6zM886.9 219.0h17.6v6.0h-17.6zM886.9 180.0h17.6v3.0h-17.6zM904.5 234.0h17.6v3.0h-17.6zM904.5 228.0h17.6v3.0h-17.6zM904.5 225.0h17.6v3.0h-17.6zM922.0 210.0h17.6v6.0h-17.6zM922.0 204.0h17.6v3.0h-17.6zM922.0 198.0h17.6v3.0h-17.6zM922.0 183.0h17.6v3.0h-17.6zM939.6 222.0h17.6v3.0h-17.6zM939.6 201.0h17.6v3.0h-17.6zM974.8 210.0h17.6v3.0h-17.6zM974.8 207.0h17.6v3.0h-17.6zM974.8 195.0h17.6v3.0h-17.6zM992.3 231.0h17.6v3.0h-17.6zM992.3 210.0h17.6v6.0h-17.6zM992.3 114.0h17.6v3.0h-17.6zM1009.9 234.0h17.6v3.0h-17.6zM1009.9 231.0h17.6v3.0h-17.6zM1009.9 228.0h17.6v3.0h-17.6zM1009.9 213.0h17.6v3.0h-17.6zM1009.9 195.0h17.6v3.0h-17.6zM1027.5 225.0h17.6v3.0h-17.6zM1045.0 195.0h17.6v3.0h-17.6zM1062.6 231.0h17.6v3.0h-17.6zM1062.6 219.0h17.6v3.0h-17.6zM1062.6 207.0h17.6v3.0h-17.6zM1062.6 204.0h17.6v6.0h-17.6zM1062.6 195.0h17.6v3.0h-17.6zM1080.2 234.0h17.6v3.0h-17.6zM1080.2 231.0h17.6v3.0h-17.6zM1080.2 207.0h17.6v3.0h-17.6zM1080.2 201.0h17.6v3.0h-17.6zM1080.2 198.0h17.6v3.0h-17.6zM1115.3 198.0h17.6v3.0h-17.6zM1115.3 186.0h17.6v3.0h-17.6zM1115.3 135.0h17.6v3.0h-17.6zM1132.9 231.0h17.6v3.0h-17.6zM1132.9 213.0h17.6v3.0h-17.6zM1132.9 192.0h17.6v3.0h-17.6zM1150.4 225.0h17.6v6.0h-17.6zM1150.4 207.0h17.6v3.0h-17.6zM1150.4 192.0h17.6v3.0h-17.6zM1168.0 228.0h17.6v3.0h-17.6zM1168.0 222.0h17.6v3.0h-17.6zM1168.0 198.0h17.6v3.0h-17.6zM1168.0 159.0h17.6v3.0h-17.6zM1185.6 222.0h17.6v3.0h-17.6zM1185.6 216.0h17.6v3.0h-17.6zM1185.6 201.0h17.6v3.0h-17.6zM1203.2 219.0h17.6v3.0h-17.6zM1203.2 213.0h17.6v6.0h-17.6zM1220.7 222.0h17.6v3.0h-17.6zM1238.3 231.0h17.6v3.0h-17.6zM1238.3 117.0h17.6v3.0h-17.6zM1238.3 108.0h17.6v3.0h-17.6zM1255.9 222.0h17.6v3.0h-17.6zM1255.9 219.0h17.6v6.0h-17.6zM1255.9 195.0h17.6v3.0h-17.6zM1273.4 231.0h17.6v3.0h-17.6zM1273.4 228.0h17.6v3.0h-17.6zM1273.4 216.0h17.6v6.0h-17.6zM1273.4 198.0h17.6v3.0h-17.6zM1273.4 150.0h17.6v3.0h-17.6zM1291.0 231.0h17.6v3.0h-17.6zM1291.0 219.0h17.6v3.0h-17.6zM1291.0 213.0h17.6v6.0h-17.6zM1308.6 231.0h17.6v3.0h-17.6zM1308.6 216.0h17.6v3.0h-17.6zM1308.6 198.0h17.6v3.0h-17.6zM1326.2 228.0h17.6v3.0h-17.6zM1326.2 198.0h17.6v3.0h-17.6zM1326.2 192.0h17.6v3.0h-17.6zM1343.7 234.0h17.6v3.0h-17.6zM1343.7 213.0h17.6v6.0h-17.6zM1361.3 234.0h17.6v3.0h-17.6zM1361.3 231.0h17.6v3.0h-17.6zM1361.3 219.0h17.6v3.0h-17.6zM1361.3 210.0h17.6v3.0h-17.6zM1378.9 234.0h17.6v3.0h-17.6zM1396.4 231.0h17.6v3.0h-17.6zM1396.4 228.0h17.6v3.0h-17.6zM1396.4 216.0h17.6v3.0h-17.6zM1396.4 204.0h17.6v6.0h-17.6zM1414.0 210.0h17.6v6.0h-17.6zM1414.0 195.0h17.6v3.0h-17.6zM1431.6 273.0h17.6v3.0h-17.6zM1431.6 261.0h17.6v3.0h-17.6zM1431.6 258.0h17.6v3.0h-17.6zM1449.1 279.0h17.6v3.0h-17.6zM1449.1 261.0h17.6v6.0h-17.6zM1466.7 279.0h17.6v3.0h-17.6zM1484.3 279.0h17.6v3.0h-17.6zM1484.3 273.0h17.6v6.0h-17.6zM1519.4 279.0h17.6v3.0h-17.6zM1519.4 264.0h17.6v3.0h-17.6zM1537.0 252.0h17.6v3.0h-17.6zM1537.0 237.0h17.6v3.0h-17.6zM1554.6 279.0h17.6v3.0h-17.6zM1572.1 279.0h17.6v3.0h-17.6zM1572.1 276.0h17.6v3.0h-17.6zM1572.1 267.0h17.6v3.0h-17.6zM1589.7 273.0h17.6v3.0h-17.6zM1607.3 267.0h17.6v6.0h-17.6zM1607.3 246.0h17.6v3.0h-17.6zM1607.3 237.0h17.6v6.0h-17.6zM1624.8 279.0h17.6v3.0h-17.6zM1660.0 279.0h17.6v3.0h-17.6zM1660.0 276.0h17.6v3.0h-17.6zM1695.1 279.0h17.6v3.0h-17.6zM1730.3 279.0h17.6v3.0h-17.6zM1730.3 276.0h17.6v6.0h-17.6zM1730.3 252.0h17.6v3.0h-17.6zM1730.3 246.0h17.6v3.0h-17.6zM1747.8 237.0h17.6v3.0h-17.6zM1800.5 279.0h17.6v3.0h-17.6zM1818.1 273.0h17.6v3.0h-17.6zM1835.7 279.0h17.6v3.0h-17.6zM1853.2 273.0h17.6v3.0h-17.6zM1888.4 279.0h17.6v3.0h-17.6zM1888.4 267.0h17.6v6.0h-17.6zM1906.0 249.0h17.6v3.0h-17.6zM1941.1 258.0h17.6v3.0h-17.6zM1976.2 279.0h17.6v3.0h-17.6zM1993.8 252.0h17.6v6.0h-17.6zM1993.8 237.0h17.6v3.0h-17.6zM2011.4 279.0h17.6v3.0h-17.6zM2046.5 279.0h17.6v3.0h-17.6zM2046.5 252.0h17.6v3.0h-17.6zM2046.5 240.0h17.6v3.0h-17.6zM2081.7 279.0h17.6v3.0h-17.6zM2081.7 261.0h17.6v6.0h-17.6zM2099.2 279.0h17.6v3.0h-17.6zM2116.8 279.0h17.6v3.0h-17.6zM2116.8 252.0h17.6v3.0h-17.6zM2151.9 279.0h17.6v3.0h-17.6zM2169.5 279.0h17.6v3.0h-17.6zM2187.1 279.0h17.6v3.0h-17.6zM2204.7 279.0h17.6v3.0h-17.6zM2204.7 258.0h17.6v3.0h-17.6zM2222.2 255.0h17.6v3.0h-17.6zM2239.8 279.0h17.6v3.0h-17.6zM2239.8 261.0h17.6v6.0h-17.6zM2257.4 279.0h17.6v3.0h-17.6zM2292.5 237.0h17.6v6.0h-17.6zM2310.1 279.0h17.6v3.0h-17.6zM2327.6 261.0h17.6v3.0h-17.6zM2345.2 279.0h17.6v3.0h-17.6zM2345.2 252.0h17.6v3.0h-17.6zM2362.8 279.0h17.6v3.0h-17.6zM2415.5 279.0h17.6v3.0h-17.6zM2433.1 276.0h17.6v3.0h-17.6zM2450.6 264.0h17.6v3.0h-17.6zM2450.6 252.0h17.6v6.0h-17.6zM2485.8 273.0h17.6v3.0h-17.6zM2520.9 273.0h9.1v3.0h-9.1z"/><path fill="#312d49" d="M1.0 186.0h7.4v3.0h-7.4zM1.0 174.0h7.4v3.0h-7.4zM1.0 168.0h7.4v6.0h-7.4zM1.0 159.0h7.4v3.0h-7.4zM1.0 150.0h7.4v3.0h-7.4zM1.0 129.0h7.4v3.0h-7.4zM1.0 120.0h7.4v3.0h-7.4zM8.4 219.0h17.6v3.0h-17.6zM8.4 207.0h17.6v3.0h-17.6zM8.4 171.0h17.6v3.0h-17.6zM8.4 168.0h17.6v3.0h-17.6zM8.4 138.0h17.6v3.0h-17.6zM8.4 129.0h17.6v3.0h-17.6zM26.0 213.0h17.6v6.0h-17.6zM26.0 123.0h17.6v3.0h-17.6zM43.5 210.0h17.6v6.0h-17.6zM43.5 195.0h17.6v3.0h-17.6zM43.5 189.0h17.6v3.0h-17.6zM61.1 225.0h17.6v6.0h-17.6zM61.1 123.0h17.6v3.0h-17.6zM78.7 213.0h17.6v3.0h-17.6zM78.7 204.0h17.6v6.0h-17.6zM78.7 174.0h17.6v3.0h-17.6zM78.7 117.0h17.6v3.0h-17.6zM96.2 222.0h17.6v3.0h-17.6zM96.2 204.0h17.6v3.0h-17.6zM113.8 198.0h17.6v3.0h-17.6zM113.8 141.0h17.6v3.0h-17.6zM131.4 183.0h17.6v6.0h-17.6zM131.4 171.0h17.6v3.0h-17.6zM131.4 165.0h17.6v3.0h-17.6zM149.0 225.0h17.6v3.0h-17.6zM149.0 186.0h17.6v6.0h-17.6zM166.5 204.0h17.6v3.0h-17.6zM166.5 168.0h17.6v3.0h-17.6zM184.1 219.0h17.6v3.0h-17.6zM201.7 222.0h17.6v3.0h-17.6zM201.7 204.0h17.6v6.0h-17.6zM201.7 180.0h17.6v3.0h-17.6zM201.7 147.0h17.6v3.0h-17.6zM219.2 129.0h17.6v3.0h-17.6zM236.8 189.0h17.6v3.0h-17.6zM254.4 222.0h17.6v3.0h-17.6zM254.4 219.0h17.6v3.0h-17.6zM254.4 213.0h17.6v3.0h-17.6zM254.4 204.0h17.6v3.0h-17.6zM254.4 186.0h17.6v3.0h-17.6zM254.4 180.0h17.6v3.0h-17.6zM254.4 153.0h17.6v3.0h-17.6zM254.4 135.0h17.6v3.0h-17.6zM272.0 189.0h17.6v3.0h-17.6zM272.0 183.0h17.6v3.0h-17.6zM272.0 168.0h17.6v6.0h-17.6zM272.0 165.0h17.6v3.0h-17.6zM272.0 153.0h17.6v3.0h-17.6zM289.5 213.0h17.6v6.0h-17.6zM289.5 210.0h17.6v6.0h-17.6zM289.5 195.0h17.6v3.0h-17.6zM289.5 171.0h17.6v3.0h-17.6zM289.5 102.0h17.6v3.0h-17.6zM307.1 213.0h17.6v3.0h-17.6zM307.1 204.0h17.6v3.0h-17.6zM307.1 183.0h17.6v3.0h-17.6zM307.1 159.0h17.6v3.0h-17.6zM307.1 150.0h17.6v3.0h-17.6zM342.2 225.0h17.6v3.0h-17.6zM342.2 198.0h17.6v3.0h-17.6zM342.2 177.0h17.6v3.0h-17.6zM359.8 210.0h17.6v3.0h-17.6zM359.8 180.0h17.6v3.0h-17.6zM359.8 99.0h17.6v3.0h-17.6zM377.4 210.0h17.6v6.0h-17.6zM394.9 210.0h17.6v3.0h-17.6zM394.9 198.0h17.6v3.0h-17.6zM394.9 165.0h17.6v3.0h-17.6zM412.5 225.0h17.6v3.0h-17.6zM412.5 153.0h17.6v6.0h-17.6zM412.5 141.0h17.6v6.0h-17.6zM430.1 225.0h17.6v3.0h-17.6zM430.1 213.0h17.6v3.0h-17.6zM430.1 201.0h17.6v3.0h-17.6zM430.1 180.0h17.6v3.0h-17.6zM430.1 165.0h17.6v3.0h-17.6zM430.1 147.0h17.6v3.0h-17.6zM430.1 141.0h17.6v3.0h-17.6zM430.1 132.0h17.6v3.0h-17.6zM447.7 225.0h17.6v6.0h-17.6zM447.7 210.0h17.6v6.0h-17.6zM447.7 207.0h17.6v3.0h-17.6zM447.7 189.0h17.6v3.0h-17.6zM465.2 225.0h17.6v3.0h-17.6zM465.2 195.0h17.6v3.0h-17.6zM465.2 153.0h17.6v3.0h-17.6zM482.8 216.0h17.6v3.0h-17.6zM482.8 213.0h17.6v3.0h-17.6zM482.8 189.0h17.6v3.0h-17.6zM517.9 213.0h17.6v6.0h-17.6zM517.9 195.0h17.6v3.0h-17.6zM517.9 159.0h17.6v3.0h-17.6zM535.5 225.0h17.6v3.0h-17.6zM535.5 207.0h17.6v3.0h-17.6zM535.5 198.0h17.6v3.0h-17.6zM535.5 174.0h17.6v3.0h-17.6zM553.1 207.0h17.6v3.0h-17.6zM553.1 177.0h17.6v3.0h-17.6zM570.6 210.0h17.6v3.0h-17.6zM570.6 207.0h17.6v6.0h-17.6zM570.6 189.0h17.6v6.0h-17.6zM570.6 162.0h17.6v6.0h-17.6zM570.6 156.0h17.6v6.0h-17.6zM570.6 105.0h17.6v3.0h-17.6zM605.8 207.0h17.6v3.0h-17.6zM605.8 201.0h17.6v3.0h-17.6zM605.8 183.0h17.6v3.0h-17.6zM605.8 171.0h17.6v3.0h-17.6zM605.8 168.0h17.6v3.0h-17.6zM605.8 162.0h17.6v3.0h-17.6zM623.4 216.0h17.6v3.0h-17.6zM623.4 210.0h17.6v3.0h-17.6zM623.4 207.0h17.6v3.0h-17.6zM623.4 186.0h17.6v3.0h-17.6zM623.4 144.0h17.6v3.0h-17.6zM623.4 141.0h17.6v3.0h-17.6zM623.4 132.0h17.6v3.0h-17.6zM623.4 108.0h17.6v3.0h-17.6zM640.9 183.0h17.6v3.0h-17.6zM640.9 180.0h17.6v6.0h-17.6zM640.9 159.0h17.6v3.0h-17.6zM658.5 174.0h17.6v3.0h-17.6zM658.5 165.0h17.6v3.0h-17.6zM676.1 225.0h17.6v3.0h-17.6zM676.1 219.0h17.6v3.0h-17.6zM676.1 210.0h17.6v3.0h-17.6zM676.1 165.0h17.6v3.0h-17.6zM676.1 153.0h17.6v3.0h-17.6zM693.6 222.0h17.6v3.0h-17.6zM693.6 219.0h17.6v3.0h-17.6zM693.6 213.0h17.6v3.0h-17.6zM693.6 186.0h17.6v3.0h-17.6zM693.6 183.0h17.6v6.0h-17.6zM693.6 168.0h17.6v6.0h-17.6zM711.2 225.0h17.6v3.0h-17.6zM711.2 210.0h17.6v6.0h-17.6zM711.2 189.0h17.6v3.0h-17.6zM711.2 153.0h17.6v3.0h-17.6zM711.2 126.0h17.6v6.0h-17.6zM728.8 210.0h17.6v3.0h-17.6zM728.8 165.0h17.6v6.0h-17.6zM746.3 222.0h17.6v3.0h-17.6zM746.3 213.0h17.6v3.0h-17.6zM746.3 204.0h17.6v3.0h-17.6zM746.3 201.0h17.6v3.0h-17.6zM746.3 174.0h17.6v3.0h-17.6zM763.9 207.0h17.6v3.0h-17.6zM763.9 195.0h17.6v3.0h-17.6zM763.9 180.0h17.6v3.0h-17.6zM781.5 225.0h17.6v6.0h-17.6zM781.5 216.0h17.6v3.0h-17.6zM781.5 189.0h17.6v6.0h-17.6zM799.1 225.0h17.6v3.0h-17.6zM799.1 219.0h17.6v3.0h-17.6zM799.1 213.0h17.6v3.0h-17.6zM799.1 207.0h17.6v6.0h-17.6zM799.1 201.0h17.6v3.0h-17.6zM799.1 198.0h17.6v3.0h-17.6zM799.1 159.0h17.6v3.0h-17.6zM799.1 138.0h17.6v3.0h-17.6zM799.1 123.0h17.6v3.0h-17.6zM816.6 219.0h17.6v3.0h-17.6zM816.6 207.0h17.6v3.0h-17.6zM816.6 204.0h17.6v3.0h-17.6zM851.8 225.0h17.6v3.0h-17.6zM851.8 213.0h17.6v3.0h-17.6zM851.8 207.0h17.6v3.0h-17.6zM851.8 195.0h17.6v3.0h-17.6zM851.8 168.0h17.6v3.0h-17.6zM869.3 213.0h17.6v3.0h-17.6zM869.3 207.0h17.6v3.0h-17.6zM869.3 168.0h17.6v3.0h-17.6zM869.3 159.0h17.6v3.0h-17.6zM869.3 147.0h17.6v6.0h-17.6zM869.3 144.0h17.6v3.0h-17.6zM886.9 225.0h17.6v3.0h-17.6zM886.9 204.0h17.6v3.0h-17.6zM886.9 189.0h17.6v3.0h-17.6zM886.9 183.0h17.6v6.0h-17.6zM886.9 129.0h17.6v6.0h-17.6zM904.5 210.0h17.6v3.0h-17.6zM904.5 204.0h17.6v3.0h-17.6zM904.5 183.0h17.6v6.0h-17.6zM904.5 168.0h17.6v3.0h-17.6zM904.5 165.0h17.6v6.0h-17.6zM904.5 156.0h17.6v3.0h-17.6zM922.0 219.0h17.6v3.0h-17.6zM922.0 207.0h17.6v3.0h-17.6zM922.0 168.0h17.6v3.0h-17.6zM939.6 189.0h17.6v3.0h-17.6zM939.6 153.0h17.6v3.0h-17.6zM939.6 147.0h17.6v6.0h-17.6zM957.2 219.0h17.6v3.0h-17.6zM957.2 195.0h17.6v3.0h-17.6zM974.8 225.0h17.6v3.0h-17.6zM974.8 204.0h17.6v6.0h-17.6zM974.8 186.0h17.6v3.0h-17.6zM974.8 177.0h17.6v3.0h-17.6zM992.3 216.0h17.6v6.0h-17.6zM992.3 198.0h17.6v3.0h-17.6zM992.3 189.0h17.6v3.0h-17.6zM992.3 186.0h17.6v3.0h-17.6zM992.3 138.0h17.6v3.0h-17.6zM992.3 108.0h17.6v3.0h-17.6zM1009.9 225.0h17.6v3.0h-17.6zM1009.9 219.0h17.6v3.0h-17.6zM1009.9 180.0h17.6v6.0h-17.6zM1009.9 126.0h17.6v3.0h-17.6zM1027.5 219.0h17.6v3.0h-17.6zM1027.5 207.0h17.6v3.0h-17.6zM1027.5 165.0h17.6v3.0h-17.6zM1027.5 144.0h17.6v3.0h-17.6zM1045.0 225.0h17.6v3.0h-17.6zM1045.0 222.0h17.6v3.0h-17.6zM1045.0 219.0h17.6v3.0h-17.6zM1062.6 192.0h17.6v3.0h-17.6zM1080.2 195.0h17.6v3.0h-17.6zM1080.2 141.0h17.6v6.0h-17.6zM1097.7 207.0h17.6v3.0h-17.6zM1097.7 189.0h17.6v3.0h-17.6zM1097.7 180.0h17.6v3.0h-17.6zM1115.3 219.0h17.6v3.0h-17.6zM1115.3 174.0h17.6v3.0h-17.6zM1132.9 222.0h17.6v6.0h-17.6zM1132.9 195.0h17.6v3.0h-17.6zM1132.9 189.0h17.6v3.0h-17.6zM1150.4 210.0h17.6v3.0h-17.6zM1150.4 186.0h17.6v3.0h-17.6zM1168.0 225.0h17.6v6.0h-17.6zM1168.0 213.0h17.6v6.0h-17.6zM1168.0 204.0h17.6v3.0h-17.6zM1168.0 201.0h17.6v3.0h-17.6zM1168.0 189.0h17.6v3.0h-17.6zM1168.0 168.0h17.6v3.0h-17.6zM1185.6 225.0h17.6v3.0h-17.6zM1185.6 207.0h17.6v3.0h-17.6zM1185.6 174.0h17.6v6.0h-17.6zM1203.2 189.0h17.6v3.0h-17.6zM1203.2 174.0h17.6v3.0h-17.6zM1220.7 207.0h17.6v3.0h-17.6zM1220.7 186.0h17.6v3.0h-17.6zM1220.7 171.0h17.6v6.0h-17.6zM1238.3 180.0h17.6v3.0h-17.6zM1255.9 213.0h17.6v3.0h-17.6zM1255.9 204.0h17.6v3.0h-17.6zM1255.9 198.0h17.6v3.0h-17.6zM1255.9 177.0h17.6v3.0h-17.6zM1255.9 162.0h17.6v3.0h-17.6zM1273.4 213.0h17.6v6.0h-17.6zM1273.4 189.0h17.6v3.0h-17.6zM1291.0 222.0h17.6v6.0h-17.6zM1291.0 207.0h17.6v3.0h-17.6zM1291.0 165.0h17.6v3.0h-17.6zM1308.6 210.0h17.6v3.0h-17.6zM1308.6 165.0h17.6v3.0h-17.6zM1308.6 120.0h17.6v3.0h-17.6zM1343.7 225.0h17.6v6.0h-17.6zM1343.7 219.0h17.6v3.0h-17.6zM1343.7 195.0h17.6v3.0h-17.6zM1343.7 135.0h17.6v3.0h-17.6zM1343.7 108.0h17.6v3.0h-17.6zM1361.3 225.0h17.6v3.0h-17.6zM1361.3 222.0h17.6v3.0h-17.6zM1361.3 216.0h17.6v3.0h-17.6zM1361.3 213.0h17.6v3.0h-17.6zM1378.9 225.0h17.6v3.0h-17.6zM1378.9 189.0h17.6v3.0h-17.6zM1378.9 144.0h17.6v3.0h-17.6zM1396.4 162.0h17.6v3.0h-17.6zM1414.0 219.0h17.6v3.0h-17.6zM1414.0 216.0h17.6v6.0h-17.6zM1414.0 213.0h17.6v3.0h-17.6zM1449.1 273.0h17.6v3.0h-17.6zM1449.1 270.0h17.6v3.0h-17.6zM1449.1 264.0h17.6v3.0h-17.6zM1466.7 267.0h17.6v3.0h-17.6zM1466.7 264.0h17.6v3.0h-17.6zM1466.7 255.0h17.6v6.0h-17.6zM1466.7 249.0h17.6v3.0h-17.6zM1484.3 270.0h17.6v3.0h-17.6zM1484.3 255.0h17.6v3.0h-17.6zM1484.3 243.0h17.6v3.0h-17.6zM1501.9 255.0h17.6v3.0h-17.6zM1537.0 270.0h17.6v3.0h-17.6zM1537.0 267.0h17.6v3.0h-17.6zM1589.7 255.0h17.6v6.0h-17.6zM1624.8 261.0h17.6v3.0h-17.6zM1624.8 258.0h17.6v6.0h-17.6zM1642.4 243.0h17.6v6.0h-17.6zM1660.0 270.0h17.6v3.0h-17.6zM1677.6 252.0h17.6v3.0h-17.6zM1677.6 249.0h17.6v3.0h-17.6zM1677.6 243.0h17.6v3.0h-17.6zM1712.7 267.0h17.6v3.0h-17.6zM1712.7 255.0h17.6v3.0h-17.6zM1747.8 270.0h17.6v6.0h-17.6zM1765.4 255.0h17.6v3.0h-17.6zM1765.4 240.0h17.6v3.0h-17.6zM1765.4 237.0h17.6v3.0h-17.6zM1783.0 258.0h17.6v3.0h-17.6zM1800.5 261.0h17.6v3.0h-17.6zM1800.5 255.0h17.6v3.0h-17.6zM1818.1 261.0h17.6v3.0h-17.6zM1818.1 258.0h17.6v3.0h-17.6zM1835.7 273.0h17.6v3.0h-17.6zM1835.7 261.0h17.6v3.0h-17.6zM1906.0 270.0h17.6v3.0h-17.6zM1941.1 252.0h17.6v3.0h-17.6zM1958.7 276.0h17.6v6.0h-17.6zM1958.7 273.0h17.6v3.0h-17.6zM2011.4 270.0h17.6v3.0h-17.6zM2011.4 267.0h17.6v3.0h-17.6zM2028.9 264.0h17.6v3.0h-17.6zM2064.1 270.0h17.6v3.0h-17.6zM2081.7 258.0h17.6v3.0h-17.6zM2099.2 252.0h17.6v6.0h-17.6zM2134.4 273.0h17.6v6.0h-17.6zM2134.4 258.0h17.6v3.0h-17.6zM2134.4 243.0h17.6v6.0h-17.6zM2151.9 270.0h17.6v3.0h-17.6zM2151.9 267.0h17.6v3.0h-17.6zM2151.9 258.0h17.6v3.0h-17.6zM2169.5 237.0h17.6v3.0h-17.6zM2187.1 240.0h17.6v3.0h-17.6zM2274.9 255.0h17.6v3.0h-17.6zM2274.9 243.0h17.6v3.0h-17.6zM2310.1 270.0h17.6v6.0h-17.6zM2345.2 249.0h17.6v3.0h-17.6zM2362.8 273.0h17.6v6.0h-17.6zM2362.8 255.0h17.6v3.0h-17.6zM2362.8 240.0h17.6v3.0h-17.6zM2397.9 264.0h17.6v3.0h-17.6zM2397.9 258.0h17.6v3.0h-17.6zM2397.9 255.0h17.6v6.0h-17.6zM2415.5 243.0h17.6v6.0h-17.6zM2433.1 267.0h17.6v3.0h-17.6zM2433.1 261.0h17.6v6.0h-17.6zM2433.1 237.0h17.6v3.0h-17.6zM2450.6 261.0h17.6v3.0h-17.6z"/><path fill="#2a2940" d="M1.0 90.0h7.4v3.0h-7.4zM1.0 51.0h7.4v3.0h-7.4zM26.0 75.0h17.6v3.0h-17.6zM43.5 96.0h17.6v3.0h-17.6zM131.4 69.0h17.6v3.0h-17.6zM236.8 78.0h17.6v3.0h-17.6zM447.7 93.0h17.6v3.0h-17.6zM640.9 75.0h17.6v3.0h-17.6zM781.5 69.0h17.6v3.0h-17.6zM816.6 51.0h17.6v3.0h-17.6zM834.2 90.0h17.6v3.0h-17.6zM922.0 54.0h17.6v3.0h-17.6zM974.8 96.0h17.6v3.0h-17.6zM1203.2 54.0h17.6v3.0h-17.6z"/><path fill="#5ebf5e" d="M8.4 276.0h17.6v3.0h-17.6zM26.0 276.0h17.6v3.0h-17.6zM113.8 276.0h17.6v3.0h-17.6zM166.5 276.0h17.6v3.0h-17.6zM254.4 276.0h17.6v3.0h-17.6zM430.1 273.0h17.6v6.0h-17.6zM447.7 279.0h17.6v3.0h-17.6zM447.7 273.0h17.6v6.0h-17.6zM465.2 279.0h17.6v3.0h-17.6zM465.2 273.0h17.6v6.0h-17.6zM482.8 279.0h17.6v3.0h-17.6zM482.8 273.0h17.6v6.0h-17.6zM535.5 279.0h17.6v3.0h-17.6zM588.2 273.0h17.6v6.0h-17.6zM605.8 279.0h17.6v3.0h-17.6zM623.4 279.0h17.6v3.0h-17.6zM658.5 279.0h17.6v3.0h-17.6zM676.1 279.0h17.6v3.0h-17.6zM693.6 279.0h17.6v3.0h-17.6zM693.6 273.0h17.6v6.0h-17.6zM711.2 273.0h17.6v6.0h-17.6zM728.8 273.0h17.6v6.0h-17.6zM746.3 273.0h17.6v6.0h-17.6zM799.1 273.0h17.6v6.0h-17.6zM816.6 279.0h17.6v3.0h-17.6zM834.2 279.0h17.6v3.0h-17.6zM851.8 273.0h17.6v6.0h-17.6zM869.3 273.0h17.6v6.0h-17.6zM904.5 279.0h17.6v3.0h-17.6zM957.2 273.0h17.6v6.0h-17.6zM974.8 273.0h17.6v6.0h-17.6zM992.3 273.0h17.6v6.0h-17.6zM1009.9 273.0h17.6v6.0h-17.6zM1027.5 273.0h17.6v6.0h-17.6zM1045.0 279.0h17.6v3.0h-17.6zM1045.0 273.0h17.6v6.0h-17.6zM1062.6 273.0h17.6v6.0h-17.6zM1080.2 279.0h17.6v3.0h-17.6zM1080.2 273.0h17.6v6.0h-17.6zM1097.7 279.0h17.6v3.0h-17.6zM1115.3 273.0h17.6v6.0h-17.6zM1132.9 279.0h17.6v3.0h-17.6zM1132.9 273.0h17.6v6.0h-17.6zM1150.4 273.0h17.6v6.0h-17.6zM1168.0 279.0h17.6v3.0h-17.6zM1203.2 273.0h17.6v6.0h-17.6zM1220.7 273.0h17.6v6.0h-17.6zM1238.3 279.0h17.6v3.0h-17.6zM1326.2 279.0h17.6v3.0h-17.6zM1343.7 279.0h17.6v3.0h-17.6zM1378.9 273.0h17.6v6.0h-17.6zM1396.4 273.0h17.6v6.0h-17.6zM1414.0 273.0h17.6v6.0h-17.6z"/><path fill="#31678a" d="M131.4 234.0h17.6v3.0h-17.6zM166.5 234.0h17.6v3.0h-17.6zM236.8 234.0h17.6v3.0h-17.6zM254.4 234.0h17.6v3.0h-17.6zM272.0 234.0h17.6v3.0h-17.6zM289.5 234.0h17.6v3.0h-17.6zM465.2 234.0h17.6v3.0h-17.6zM482.8 234.0h17.6v3.0h-17.6zM517.9 234.0h17.6v3.0h-17.6zM605.8 234.0h17.6v3.0h-17.6zM640.9 234.0h17.6v3.0h-17.6zM974.8 234.0h17.6v3.0h-17.6zM1027.5 234.0h17.6v3.0h-17.6zM1203.2 234.0h17.6v3.0h-17.6zM1326.2 234.0h17.6v3.0h-17.6zM1414.0 234.0h17.6v3.0h-17.6z"/><path d="M8.4 252V284M26.0 252V284M43.5 252V284M61.1 252V284M96.2 252V284M131.4 252V284M166.5 252V284M184.1 252V284M201.7 252V284M236.8 252V284M272.0 252V284M307.1 252V284M324.7 252V284M342.2 252V284M377.4 252V284M412.5 252V284M447.7 252V284M482.8 252V284M517.9 252V284M553.1 252V284M588.2 252V284M623.4 252V284M658.5 252V284M693.6 252V284M728.8 252V284M746.3 252V284M763.9 252V284M799.1 252V284M834.2 252V284M869.3 252V284M904.5 252V284M939.6 252V284M957.2 252V284M974.8 252V284M1009.9 252V284M1027.5 252V284M1045.0 252V284M1062.6 252V284M1080.2 252V284M1115.3 252V284M1150.4 252V284M1185.6 252V284M1203.2 252V284M1220.7 252V284M1255.9 252V284M1291.0 252V284M1326.2 252V284M1361.3 252V284M1396.4 252V284M1 269.6H1431" stroke="#101217" stroke-width="1" fill="none" opacity="0.5"/></svg>
<div class="b" style="left:1071.00px;top:238.00px;width:2.00px;height:286.00px;background:#7b7b7d;"></div>
<svg class="s" style="left:1072.00px;top:522.00px;" width="2540.00" height="4.00" viewBox="0 0 2540 4"><line x1="0" y1="2" x2="2530" y2="2" stroke="#808083" stroke-width="2" stroke-dasharray="3 3"/></svg>
<div class="b" style="left:1071.20px;top:525.00px;width:2.00px;height:17.00px;background:#121419;"></div>
<div class="t" style="left:1021.80px;top:553.00px;font-size:25.44px;line-height:25.44px;font-family:'Liberation Mono', monospace;color:#878787;letter-spacing:-0.864px;">10:00pm</div>
<div class="b" style="left:1176.61px;top:525.00px;width:2.00px;height:17.00px;background:#121419;"></div>
<div class="t" style="left:1127.21px;top:553.00px;font-size:25.44px;line-height:25.44px;font-family:'Liberation Mono', monospace;color:#878787;letter-spacing:-0.864px;">10:30pm</div>
<div class="b" style="left:1282.02px;top:525.00px;width:2.00px;height:17.00px;background:#121419;"></div>
<div class="t" style="left:1232.62px;top:553.00px;font-size:25.44px;line-height:25.44px;font-family:'Liberation Mono', monospace;color:#878787;letter-spacing:-0.864px;">11:00pm</div>
<div class="b" style="left:1387.43px;top:525.00px;width:2.00px;height:17.00px;background:#121419;"></div>
<div class="t" style="left:1338.03px;top:553.00px;font-size:25.44px;line-height:25.44px;font-family:'Liberation Mono', monospace;color:#878787;letter-spacing:-0.864px;">11:30pm</div>
<div class="b" style="left:1492.84px;top:525.00px;width:2.00px;height:17.00px;background:#121419;"></div>
<div class="t" style="left:1443.44px;top:553.00px;font-size:25.44px;line-height:25.44px;font-family:'Liberation Mono', monospace;color:#878787;letter-spacing:-0.864px;">12:00am</div>
<div class="b" style="left:1598.25px;top:525.00px;width:2.00px;height:17.00px;background:#121419;"></div>
<div class="t" style="left:1548.85px;top:553.00px;font-size:25.44px;line-height:25.44px;font-family:'Liberation Mono', monospace;color:#878787;letter-spacing:-0.864px;">12:30am</div>
<div class="b" style="left:1703.66px;top:525.00px;width:2.00px;height:17.00px;background:#121419;"></div>
<div class="t" style="left:1661.46px;top:553.00px;font-size:25.44px;line-height:25.44px;font-family:'Liberation Mono', monospace;color:#878787;letter-spacing:-0.864px;">1:00am</div>
<div class="b" style="left:1809.07px;top:525.00px;width:2.00px;height:17.00px;background:#121419;"></div>
<div class="t" style="left:1766.87px;top:553.00px;font-size:25.44px;line-height:25.44px;font-family:'Liberation Mono', monospace;color:#878787;letter-spacing:-0.864px;">1:30am</div>
<div class="b" style="left:1914.48px;top:525.00px;width:2.00px;height:17.00px;background:#121419;"></div>
<div class="t" style="left:1872.28px;top:553.00px;font-size:25.44px;line-height:25.44px;font-family:'Liberation Mono', monospace;color:#878787;letter-spacing:-0.864px;">2:00am</div>
<div class="b" style="left:2019.89px;top:525.00px;width:2.00px;height:17.00px;background:#121419;"></div>
<div class="t" style="left:1977.69px;top:553.00px;font-size:25.44px;line-height:25.44px;font-family:'Liberation Mono', monospace;color:#878787;letter-spacing:-0.864px;">2:30am</div>
<div class="b" style="left:2125.30px;top:525.00px;width:2.00px;height:17.00px;background:#121419;"></div>
<div class="t" style="left:2083.10px;top:553.00px;font-size:25.44px;line-height:25.44px;font-family:'Liberation Mono', monospace;color:#878787;letter-spacing:-0.864px;">3:00am</div>
<div class="b" style="left:2230.71px;top:525.00px;width:2.00px;height:17.00px;background:#121419;"></div>
<div class="t" style="left:2188.51px;top:553.00px;font-size:25.44px;line-height:25.44px;font-family:'Liberation Mono', monospace;color:#878787;letter-spacing:-0.864px;">3:30am</div>
<div class="b" style="left:2336.12px;top:525.00px;width:2.00px;height:17.00px;background:#121419;"></div>
<div class="t" style="left:2293.92px;top:553.00px;font-size:25.44px;line-height:25.44px;font-family:'Liberation Mono', monospace;color:#878787;letter-spacing:-0.864px;">4:00am</div>
<div class="b" style="left:2441.53px;top:525.00px;width:2.00px;height:17.00px;background:#121419;"></div>
<div class="t" style="left:2399.33px;top:553.00px;font-size:25.44px;line-height:25.44px;font-family:'Liberation Mono', monospace;color:#878787;letter-spacing:-0.864px;">4:30am</div>
<div class="b" style="left:2546.94px;top:525.00px;width:2.00px;height:17.00px;background:#121419;"></div>
<div class="t" style="left:2504.74px;top:553.00px;font-size:25.44px;line-height:25.44px;font-family:'Liberation Mono', monospace;color:#878787;letter-spacing:-0.864px;">5:00am</div>
<div class="b" style="left:2652.35px;top:525.00px;width:2.00px;height:17.00px;background:#121419;"></div>
<div class="t" style="left:2610.15px;top:553.00px;font-size:25.44px;line-height:25.44px;font-family:'Liberation Mono', monospace;color:#878787;letter-spacing:-0.864px;">5:30am</div>
<div class="b" style="left:2757.76px;top:525.00px;width:2.00px;height:17.00px;background:#121419;"></div>
<div class="t" style="left:2715.56px;top:553.00px;font-size:25.44px;line-height:25.44px;font-family:'Liberation Mono', monospace;color:#878787;letter-spacing:-0.864px;">6:00am</div>
<div class="b" style="left:2863.17px;top:525.00px;width:2.00px;height:17.00px;background:#121419;"></div>
<div class="t" style="left:2820.97px;top:553.00px;font-size:25.44px;line-height:25.44px;font-family:'Liberation Mono', monospace;color:#878787;letter-spacing:-0.864px;">6:30am</div>
<div class="b" style="left:2968.58px;top:525.00px;width:2.00px;height:17.00px;background:#121419;"></div>
<div class="t" style="left:2926.38px;top:553.00px;font-size:25.44px;line-height:25.44px;font-family:'Liberation Mono', monospace;color:#878787;letter-spacing:-0.864px;">7:00am</div>
<div class="b" style="left:3073.99px;top:525.00px;width:2.00px;height:17.00px;background:#121419;"></div>
<div class="t" style="left:3031.79px;top:553.00px;font-size:25.44px;line-height:25.44px;font-family:'Liberation Mono', monospace;color:#878787;letter-spacing:-0.864px;">7:30am</div>
<div class="b" style="left:3179.40px;top:525.00px;width:2.00px;height:17.00px;background:#121419;"></div>
<div class="t" style="left:3137.20px;top:553.00px;font-size:25.44px;line-height:25.44px;font-family:'Liberation Mono', monospace;color:#878787;letter-spacing:-0.864px;">8:00am</div>
<div class="b" style="left:3284.81px;top:525.00px;width:2.00px;height:17.00px;background:#121419;"></div>
<div class="t" style="left:3242.61px;top:553.00px;font-size:25.44px;line-height:25.44px;font-family:'Liberation Mono', monospace;color:#878787;letter-spacing:-0.864px;">8:30am</div>
<div class="b" style="left:3390.22px;top:525.00px;width:2.00px;height:17.00px;background:#121419;"></div>
<div class="t" style="left:3348.02px;top:553.00px;font-size:25.44px;line-height:25.44px;font-family:'Liberation Mono', monospace;color:#878787;letter-spacing:-0.864px;">9:00am</div>
<div class="b" style="left:3495.63px;top:525.00px;width:2.00px;height:17.00px;background:#121419;"></div>
<div class="t" style="left:3453.43px;top:553.00px;font-size:25.44px;line-height:25.44px;font-family:'Liberation Mono', monospace;color:#878787;letter-spacing:-0.864px;">9:30am</div>
<div class="b" style="left:3601.04px;top:525.00px;width:2.00px;height:17.00px;background:#121419;"></div>
<div class="t" style="left:3551.64px;top:553.00px;font-size:25.44px;line-height:25.44px;font-family:'Liberation Mono', monospace;color:#878787;letter-spacing:-0.864px;">10:00am</div>
<div class="t" style="left:1021.80px;top:590.00px;font-size:25.44px;line-height:25.44px;font-family:'Liberation Mono', monospace;color:#878787;letter-spacing:-0.864px;">9/14/25</div>
<div class="t" style="left:1465.04px;top:590.00px;font-size:25.44px;line-height:25.44px;font-family:'Liberation Mono', monospace;color:#878787;letter-spacing:-0.864px;">9/15</div>
<div class="b" style="left:1080.00px;top:338.00px;width:1432.00px;height:152.00px;background:rgba(80,230,120,0.055);border:2px solid #52f47e;"></div>
<div class="b" style="left:1080.50px;top:274.00px;width:308.50px;height:54.70px;background:#1b1e26;border:2px solid #666b7a;border-radius:5px;"></div>
<div class="t" style="left:1099.20px;top:291.50px;font-size:25.44px;line-height:25.44px;font-family:'Liberation Mono', monospace;color:#e8e8ec;letter-spacing:-0.864px;">Filter by Selection</div>
</body></html>
